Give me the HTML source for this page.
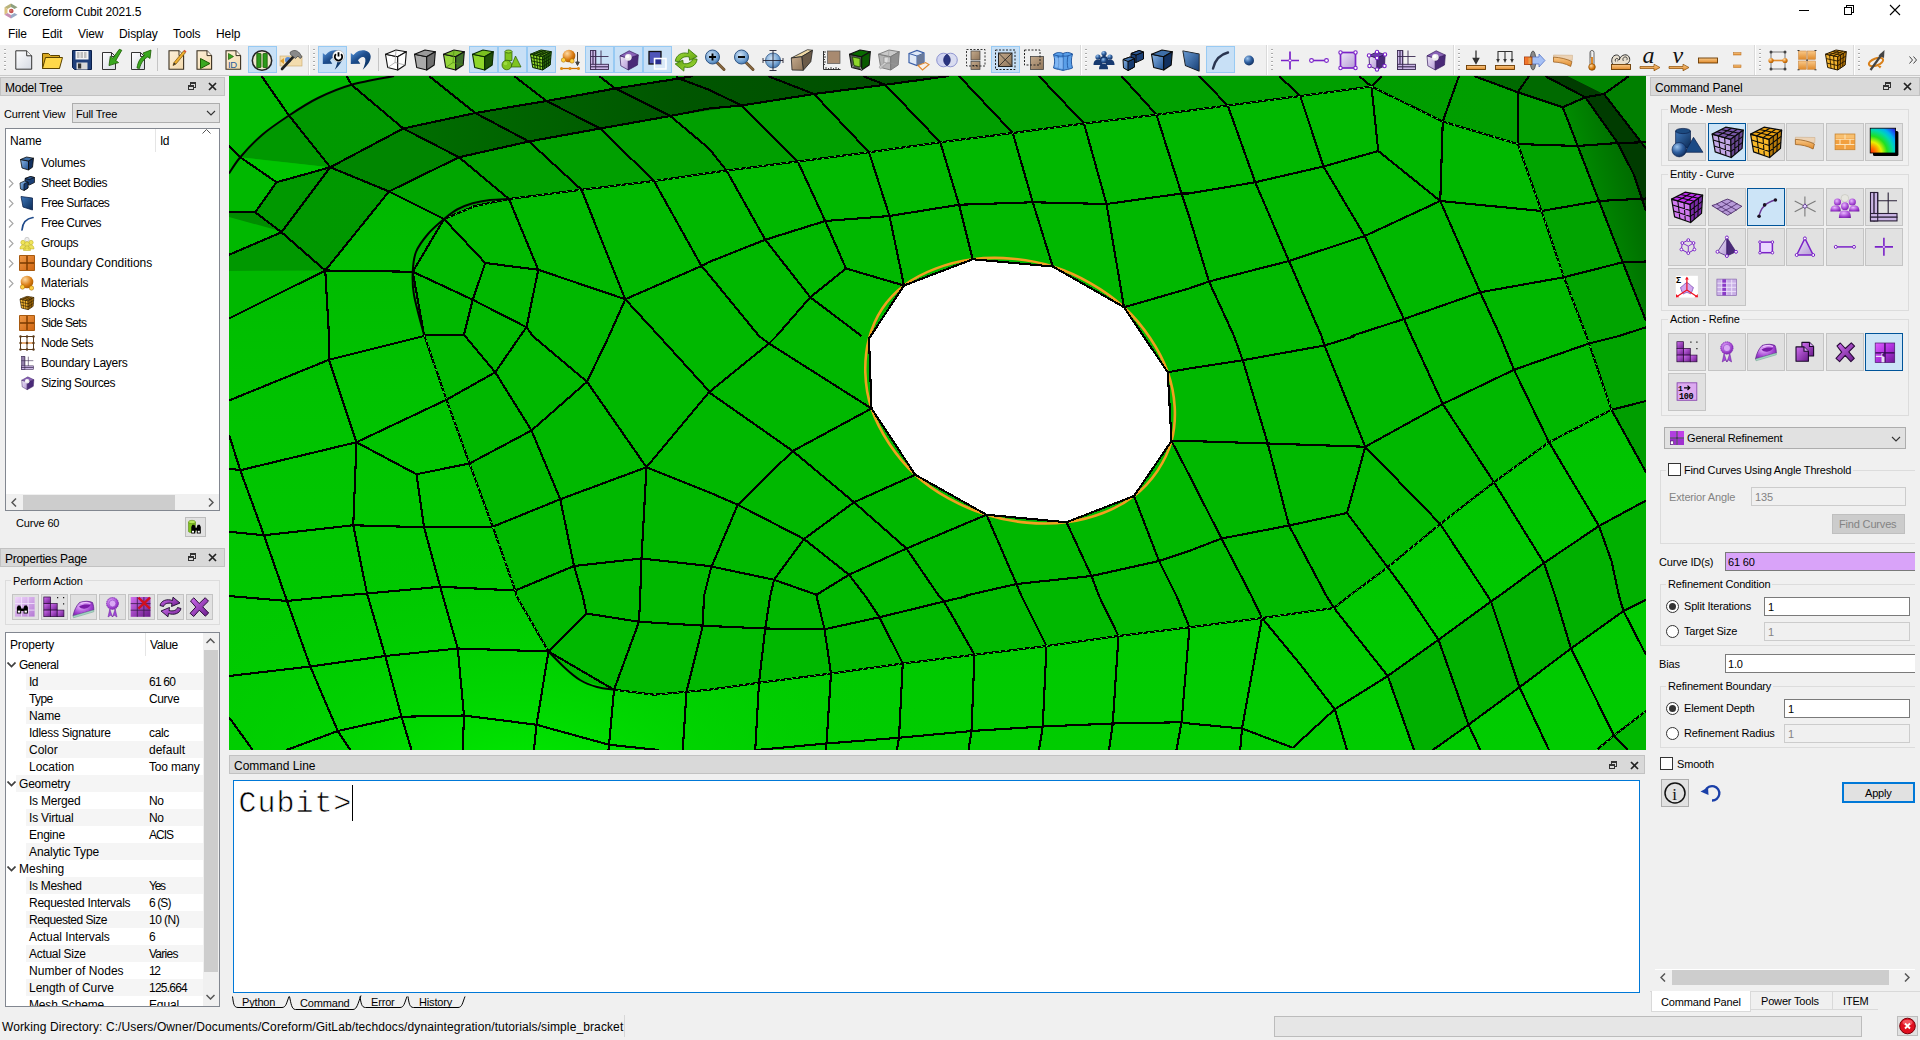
<!DOCTYPE html>
<html><head><meta charset="utf-8"><title>Coreform Cubit 2021.5</title>
<style>
*{box-sizing:border-box;margin:0;padding:0}
html,body{width:1920px;height:1040px;overflow:hidden;background:#f0f0f0}
body{font-family:"Liberation Sans",sans-serif;font-size:12px;color:#000;position:relative;line-height:1}
.abs{position:absolute}
.t{position:absolute;white-space:nowrap;line-height:14px;height:14px;font-size:12px;letter-spacing:-0.15px}
.s{position:absolute;white-space:nowrap;line-height:14px;height:14px;font-size:11px;letter-spacing:-0.17px}
.dt{position:absolute;background:#d9d9d9;border:1px solid #c2c2c2}
.gb{position:absolute;border:1px solid #dcdcdc}
.gbl{position:absolute;background:#f0f0f0;padding:0 2px;white-space:nowrap;line-height:14px;height:14px;font-size:11px;letter-spacing:-0.17px}
.btn{position:absolute;background:#e1e1e1;border:1px solid #adadad}
.btn.on{background:#cce4f7;border-color:#005499}
.fld{position:absolute;background:#fff;border:1px solid #7a7a7a}
.fld.dis{background:#f0f0f0;border-color:#cccccc;color:#838383}
.tb-on{position:absolute;background:#c8e0f6;border:1px solid #98caf3;top:46px;height:27px;width:29px}
.sep{position:absolute;top:48px;width:1px;height:23px;background:#c5c5c5}
.hdl{position:absolute;top:49px;width:2px;height:21px;background:repeating-linear-gradient(#a9a9a9 0 1px,#fff 1px 2px,transparent 2px 4px)}
.ic{position:absolute;width:24px;height:24px;top:48px}
.cb{position:absolute;width:13px;height:13px;background:#fff;border:1px solid #333}
.rd{position:absolute;width:13px;height:13px;border-radius:50%;background:#fff;border:1px solid #333}
.rd.on::after{content:"";position:absolute;left:2px;top:2px;width:7px;height:7px;border-radius:50%;background:#333}
.row{position:absolute;left:6px;height:17px}
</style></head>
<body>
<div class="abs" style="left:0;top:0;width:1920px;height:45px;background:#fff"></div>
<div class="abs" style="left:2.5px;top:3px;width:16px;height:16px"><svg width="16" height="16" viewBox="0 0 16 16" style="display:block;"><path d="M1.5 4.2L8 0.5L8 4L4.5 6Z" fill="#b9b37c"/><path d="M8 0.5L14.5 4.2L11.5 6L8 4Z" fill="#8fa07e"/><path d="M1.5 11.8L1.5 4.2L4.5 6L4.5 10Z" fill="#dcc27e"/><path d="M8 15.5L1.5 11.8L4.5 10L8 12Z" fill="#c78fb4"/><path d="M14.5 11.8L8 15.5L8 12L11.5 10Z" fill="#9aaac6"/><circle cx="8.3" cy="8" r="2.3" fill="#c25252"/><circle cx="7.8" cy="7.4" r="1" fill="#d87a6a"/></svg></div>
<div class="t" style="left:23px;top:5px;letter-spacing:-0.15px">Coreform Cubit 2021.5</div>
<svg class="abs" style="left:1780px;top:0" width="140" height="22" viewBox="0 0 140 22"><g stroke="#000" stroke-width="1" fill="none" shape-rendering="crispEdges"><path d="M19 10.5h10"/><path d="M64.5 7.5h7v7h-7zM66.5 7.5v-2h7v7h-2"/></g><path d="M110 5l10 10M120 5l-10 10" stroke="#000" stroke-width="1.1" fill="none"/></svg>
<div class="t" style="left:8px;top:27px;letter-spacing:-0.1px">File</div>
<div class="t" style="left:42px;top:27px;letter-spacing:-0.1px">Edit</div>
<div class="t" style="left:78px;top:27px;letter-spacing:-0.1px">View</div>
<div class="t" style="left:119px;top:27px;letter-spacing:-0.1px">Display</div>
<div class="t" style="left:173px;top:27px;letter-spacing:-0.1px">Tools</div>
<div class="t" style="left:216px;top:27px;letter-spacing:-0.1px">Help</div>
<div class="abs" style="left:0;top:45px;width:1920px;height:31px;background:#f0f0f0"></div>
<div class="abs" style="left:0;top:75px;width:1920px;height:1px;background:#c9c9c9"></div>
<svg width="0" height="0" style="position:absolute"><defs>
<linearGradient id="gOr" x1="0" y1="0" x2="0" y2="1"><stop offset="0" stop-color="#f9c98a"/><stop offset="1" stop-color="#e08a2a"/></linearGradient>
<linearGradient id="gOrH" x1="0" y1="0" x2="1" y2="0"><stop offset="0" stop-color="#f9c98a"/><stop offset="1" stop-color="#e08a2a"/></linearGradient>
<linearGradient id="gBl" x1="0" y1="0" x2="1" y2="1"><stop offset="0" stop-color="#8db8e8"/><stop offset="1" stop-color="#1f4f8f"/></linearGradient>
<linearGradient id="gBlD" x1="0" y1="0" x2="1" y2="1"><stop offset="0" stop-color="#3f78bb"/><stop offset="1" stop-color="#0b2a55"/></linearGradient>
<linearGradient id="gPu" x1="0" y1="0" x2="1" y2="1"><stop offset="0" stop-color="#eee6f7"/><stop offset="1" stop-color="#b49ad6"/></linearGradient>
<linearGradient id="gPg" x1="0" y1="0" x2="1" y2="1"><stop offset="0" stop-color="#ffffff"/><stop offset="1" stop-color="#d5d9e2"/></linearGradient>
<linearGradient id="gBg" x1="0" y1="0" x2="1" y2="1"><stop offset="0" stop-color="#fdf0d8"/><stop offset="1" stop-color="#f3d9ad"/></linearGradient>
<linearGradient id="gBr" x1="0" y1="0" x2="1" y2="1"><stop offset="0" stop-color="#c4aa8c"/><stop offset="1" stop-color="#8f755a"/></linearGradient>
<linearGradient id="gGr" x1="0" y1="0" x2="1" y2="1"><stop offset="0" stop-color="#a5e03a"/><stop offset="1" stop-color="#5fa010"/></linearGradient>
<radialGradient id="rBl" cx="0.35" cy="0.3" r="0.8"><stop offset="0" stop-color="#9cc4ee"/><stop offset="0.5" stop-color="#2f5f9f"/><stop offset="1" stop-color="#0b2550"/></radialGradient>
<radialGradient id="rOr" cx="0.35" cy="0.3" r="0.8"><stop offset="0" stop-color="#ffd9a0"/><stop offset="0.6" stop-color="#d97a10"/><stop offset="1" stop-color="#9a5200"/></radialGradient>
<radialGradient id="rPu" cx="0.4" cy="0.35" r="0.8"><stop offset="0" stop-color="#e9b8ff"/><stop offset="0.6" stop-color="#a040d0"/><stop offset="1" stop-color="#6a1a9a"/></radialGradient>
<radialGradient id="rGl" cx="0.4" cy="0.35" r="0.7"><stop offset="0" stop-color="#cfe2f5"/><stop offset="0.7" stop-color="#6f9fd0"/><stop offset="1" stop-color="#3f6fa5"/></radialGradient>
<radialGradient id="rRb" gradientUnits="userSpaceOnUse" cx="3.5" cy="27.5" r="30"><stop offset="0" stop-color="#ff1000"/><stop offset="0.22" stop-color="#ff9000"/><stop offset="0.38" stop-color="#f0f000"/><stop offset="0.55" stop-color="#20e020"/><stop offset="0.72" stop-color="#00d0e0"/><stop offset="0.9" stop-color="#2050ff"/><stop offset="1" stop-color="#2030d0"/></radialGradient>
<radialGradient id="rRb2" gradientUnits="userSpaceOnUse" cx="5.2" cy="30" r="34"><stop offset="0" stop-color="#ff1800"/><stop offset="0.2" stop-color="#ff9000"/><stop offset="0.33" stop-color="#e8f000"/><stop offset="0.5" stop-color="#20e020"/><stop offset="0.68" stop-color="#00d8b0"/><stop offset="0.8" stop-color="#00b0f0"/><stop offset="0.95" stop-color="#2040f0"/><stop offset="1" stop-color="#2030c0"/></radialGradient>
<linearGradient id="gPd" x1="0" y1="0" x2="1" y2="1"><stop offset="0" stop-color="#d070f0"/><stop offset="1" stop-color="#6a1a8a"/></linearGradient>
<linearGradient id="gPd2" x1="0" y1="0" x2="1" y2="1"><stop offset="0" stop-color="#e060ff"/><stop offset="0.5" stop-color="#b030e0"/><stop offset="1" stop-color="#6a1a90"/></linearGradient>
<linearGradient id="gPg3" x1="0" y1="0" x2="1" y2="1"><stop offset="0" stop-color="#f0d8fb"/><stop offset="1" stop-color="#b478d4"/></linearGradient>
<linearGradient id="gOrD" x1="0" y1="0" x2="1" y2="1"><stop offset="0" stop-color="#f09a48"/><stop offset="1" stop-color="#cf6410"/></linearGradient>
<linearGradient id="gUn" x1="0" y1="0" x2="0.7" y2="1"><stop offset="0" stop-color="#5a9ae0"/><stop offset="0.45" stop-color="#1f4f8f"/><stop offset="1" stop-color="#08305f"/></linearGradient>
<linearGradient id="gRb" x1="0" y1="1" x2="1" y2="0"><stop offset="0" stop-color="#ff2000"/><stop offset="0.3" stop-color="#ffe000"/><stop offset="0.55" stop-color="#20e020"/><stop offset="0.8" stop-color="#00c0ff"/><stop offset="1" stop-color="#2040ff"/></linearGradient>
</defs></svg>
<div class="hdl" style="left:4px"></div>
<div class="sep" style="left:157px"></div>
<div class="sep" style="left:378px"></div>
<div class="sep" style="left:308px;top:45px;height:30px;background:#dadada"></div><div class="sep" style="left:309px;top:45px;height:30px;background:#fff"></div>
<div class="hdl" style="left:313px"></div>
<div class="sep" style="left:1080px;top:45px;height:30px;background:#dadada"></div><div class="sep" style="left:1081px;top:45px;height:30px;background:#fff"></div>
<div class="hdl" style="left:1085px"></div>
<div class="sep" style="left:1266px;top:45px;height:30px;background:#dadada"></div><div class="sep" style="left:1267px;top:45px;height:30px;background:#fff"></div>
<div class="hdl" style="left:1271px"></div>
<div class="sep" style="left:1453px;top:45px;height:30px;background:#dadada"></div><div class="sep" style="left:1454px;top:45px;height:30px;background:#fff"></div>
<div class="hdl" style="left:1458px"></div>
<div class="sep" style="left:1754px;top:45px;height:30px;background:#dadada"></div><div class="sep" style="left:1755px;top:45px;height:30px;background:#fff"></div>
<div class="hdl" style="left:1759px"></div>
<div class="sep" style="left:1853px;top:45px;height:30px;background:#dadada"></div><div class="sep" style="left:1854px;top:45px;height:30px;background:#fff"></div>
<div class="hdl" style="left:1858px"></div>
<div class="ic" style="left:11px"><svg width="24" height="24" viewBox="0 0 24 24" style="display:block;"><path d="M4.8 2.8h10.9l5 5v13.4h-15.9z" fill="url(#gPg)" stroke="#333" stroke-width="1"/><path d="M15.7 2.8v5h5" fill="#f4f4f4" stroke="#333" stroke-width="1"/></svg></div>
<div class="ic" style="left:40px"><svg width="24" height="24" viewBox="0 0 24 24" style="display:block;"><path d="M2.5 20.5V5.5h6l2 2h9v13z" fill="#d9a820" stroke="#5a4200" stroke-width="1"/><path d="M2.5 20.5L5.5 9.5h17l-3 11z" fill="#ffd84a" stroke="#5a4200" stroke-width="1"/></svg></div>
<div class="ic" style="left:69.5px"><svg width="24" height="24" viewBox="0 0 24 24" style="display:block;"><path d="M2.5 2.5h19v19h-17l-2-2z" fill="#1f3f7a" stroke="#0a1f4a" stroke-width="1"/><rect x="5.5" y="3" width="13" height="8.5" fill="#f4f4f4"/><path d="M7 5h10M7 7h10M7 9h10" stroke="#8a8a8a" stroke-width="1" stroke-dasharray="2.5 1"/><rect x="6.5" y="14.5" width="11" height="7" fill="#d8d8d8"/><rect x="8" y="15.5" width="3.2" height="5" fill="#333"/></svg></div>
<div class="ic" style="left:98.5px"><svg width="24" height="24" viewBox="0 0 24 24" style="display:block;"><path d="M3.5 4.5h9l4 4v13h-13z" fill="url(#gPg)" stroke="#333" stroke-width="1"/><path d="M12.5 4.5v4h4" fill="none" stroke="#333"/><path d="M22.8 2.3L20.3 1.3L13.8 10.2L11.3 8.2L10 17.6L19.6 14.6L16.8 12.5Z" fill="#3aa820" stroke="#1a5a00" stroke-width="0.8" stroke-linejoin="round"/></svg></div>
<div class="ic" style="left:127.5px"><svg width="24" height="24" viewBox="0 0 24 24" style="display:block;"><path d="M3.5 4.5h9l4 4v13h-13z" fill="url(#gPg)" stroke="#333" stroke-width="1"/><path d="M12.5 4.5v4h4" fill="none" stroke="#333"/><path d="M9 20C10 13 13 9 16.5 7.5L15 5l8-3-1 8.5-2.2-1.6C16 11 13 14.5 11.5 20.5z" fill="#3aa820" stroke="#1a5a00" stroke-width="0.8"/></svg></div>
<div class="ic" style="left:163.5px"><svg width="24" height="24" viewBox="0 0 24 24" style="display:block;"><path d="M5 2.8h10l4.6 4.8v13.6h-14.6z" fill="url(#gBg)" stroke="#3a3020" stroke-width="1.1"/><path d="M15 2.8v4.8h4.6" fill="#fff6e6" stroke="#3a3020" stroke-width="1"/><path d="M9 17.5l1-3L19.5 3l2 1.6L12 16z" fill="#f0b030" stroke="#7a5000" stroke-width="0.7"/><path d="M9 17.5l1-3 2 1.5z" fill="#333"/><path d="M19.5 3l1-1.2 2 1.6-1 1.2z" fill="#e05030"/></svg></div>
<div class="ic" style="left:192px"><svg width="24" height="24" viewBox="0 0 24 24" style="display:block;"><path d="M5 2.8h10l4.6 4.8v13.6h-14.6z" fill="url(#gBg)" stroke="#3a3020" stroke-width="1.1"/><path d="M15 2.8v4.8h4.6" fill="#fff6e6" stroke="#3a3020" stroke-width="1"/><path d="M8.5 10.5l9.5 5-9.5 5z" fill="#3aa820" stroke="#1a5a00" stroke-width="1"/></svg></div>
<div class="ic" style="left:221px"><svg width="24" height="24" viewBox="0 0 24 24" style="display:block;"><path d="M5 2.8h10l4.6 4.8v13.6h-14.6z" fill="url(#gBg)" stroke="#3a3020" stroke-width="1.1"/><path d="M15 2.8v4.8h4.6" fill="#fff6e6" stroke="#3a3020" stroke-width="1"/><path d="M7.5 5.5l5 3-5 3z" fill="#3aa820" stroke="#1a5a00" stroke-width="0.7"/><text x="7" y="19.6" font-family="Liberation Sans" font-size="9.5" fill="#2a5a9a" letter-spacing="-0.3">ID</text></svg></div>
<div class="tb-on" style="left:247.5px"></div>
<div class="ic" style="left:250px"><svg width="24" height="24" viewBox="0 0 24 24" style="display:block;"><circle cx="12" cy="12.5" r="9.7" fill="#efe6cf" stroke="#222" stroke-width="1.5"/><rect x="6.8" y="5.5" width="4.2" height="14" rx="0.5" fill="#2a9a1a" stroke="#1a5a00" stroke-width="0.8"/><rect x="13" y="5.5" width="4.2" height="14" rx="0.5" fill="#2a9a1a" stroke="#1a5a00" stroke-width="0.8"/></svg></div>
<div class="ic" style="left:279px"><svg width="24" height="24" viewBox="0 0 24 24" style="display:block;"><rect x="1" y="8" width="22" height="10" fill="#f3dcae" stroke="#c9a86a" stroke-width="0.6"/><circle cx="9" cy="12" r="3" fill="#5a8ad0"/><path d="M1 13l4-3v6z" fill="#e0a030"/><path d="M3 21L15 8" stroke="#222" stroke-width="2.6" stroke-linecap="round"/><path d="M11 4.5c3-3 7-2.5 9.5 0.5l2.5 4-2 1.5-2-2.5-2.5 2.5-5-4z" fill="#8a8a8a" stroke="#444" stroke-width="0.7"/></svg></div>
<div class="tb-on" style="left:318.0px"></div>
<div class="ic" style="left:320.5px"><svg width="24" height="24" viewBox="0 0 24 24" style="display:block;"><path d="M1.8 5L4.3 7C6 5.5 9 2.2 13.7 2.2C18 2.2 21.7 4.5 21.7 8.5C21.7 13 18 18 13.7 21.7C15.5 18 16.8 14 16.3 11C16 9.5 14.8 9 13.7 9C12 9 10.5 10.5 9 12.3L11.3 15.7L1.8 16Z" fill="url(#gUn)"/><circle cx="17.5" cy="8.2" r="5.8" fill="#fff" stroke="#aaa" stroke-width="0.6"/><path d="M14.9 6.2a3.7 3.7 0 1 0 5.2 0M17.5 4.3v4.3" stroke="#000" stroke-width="1.8" fill="none"/></svg></div>
<div class="ic" style="left:349px"><svg width="24" height="24" viewBox="0 0 24 24" style="display:block;"><path d="M1.8 5L4.3 7C6 5.5 9 2.2 13.7 2.2C18 2.2 21.7 4.5 21.7 8.5C21.7 13 18 18 13.7 21.7C15.5 18 16.8 14 16.3 11C16 9.5 14.8 9 13.7 9C12 9 10.5 10.5 9 12.3L11.3 15.7L1.8 16Z" fill="url(#gUn)"/></svg></div>
<div class="ic" style="left:384px"><svg width="24" height="24" viewBox="0 0 24 24" style="display:block;"><g stroke="#111" stroke-width="1.1" stroke-linejoin="round"><path d="M1.5 6.2L13.7 8.7L13.7 22L3.7 19.5Z" fill="#ffffff"/><path d="M1.5 6.2L12 2L22.3 3.7L13.7 8.7Z" fill="#ffffff"/><path d="M13.7 8.7L22.3 3.7L21.2 17L13.7 22Z" fill="#ffffff"/></g><path d="M12 2L11 14.5L3.7 19.5M11 14.5L21.2 17" stroke="#999" stroke-width="0.7" fill="none"/></svg></div>
<div class="ic" style="left:413px"><svg width="24" height="24" viewBox="0 0 24 24" style="display:block;"><g stroke="#111" stroke-width="1.1" stroke-linejoin="round"><path d="M1.5 6.2L13.7 8.7L13.7 22L3.7 19.5Z" fill="#a9a9a9"/><path d="M1.5 6.2L12 2L22.3 3.7L13.7 8.7Z" fill="#9a9a9a"/><path d="M13.7 8.7L22.3 3.7L21.2 17L13.7 22Z" fill="#6f6f6f"/></g></svg></div>
<div class="ic" style="left:442px"><svg width="24" height="24" viewBox="0 0 24 24" style="display:block;"><g stroke="#111" stroke-width="1.1" stroke-linejoin="round"><path d="M1.5 6.2L13.7 8.7L13.7 22L3.7 19.5Z" fill="#95d63a"/><path d="M1.5 6.2L12 2L22.3 3.7L13.7 8.7Z" fill="#7fc030"/><path d="M13.7 8.7L22.3 3.7L21.2 17L13.7 22Z" fill="#3f6f2a"/></g><path d="M12 2L11 14.5L3.7 19.5M11 14.5L21.2 17" stroke="#4a8a10" stroke-width="0.7" fill="none"/></svg></div>
<div class="tb-on" style="left:468.5px"></div>
<div class="ic" style="left:471px"><svg width="24" height="24" viewBox="0 0 24 24" style="display:block;"><g stroke="#0a2a00" stroke-width="1.1" stroke-linejoin="round"><path d="M1.5 6.2L13.7 8.7L13.7 22L3.7 19.5Z" fill="#8fd62a"/><path d="M1.5 6.2L12 2L22.3 3.7L13.7 8.7Z" fill="#7ac020"/><path d="M13.7 8.7L22.3 3.7L21.2 17L13.7 22Z" fill="#1f4f08"/></g></svg></div>
<div class="tb-on" style="left:497.5px"></div>
<div class="ic" style="left:500px"><svg width="24" height="24" viewBox="0 0 24 24" style="display:block;"><path d="M5 3.5v9h7v-9" fill="#7fc41f" stroke="#2a5a00" stroke-width="0.7"/><ellipse cx="8.5" cy="3.5" rx="3.5" ry="1.5" fill="#9ad83a" stroke="#2a5a00" stroke-width="0.7"/><path d="M15.5 8l5.5 11h-10z" fill="#7fc41f" stroke="#2a5a00" stroke-width="0.7"/><circle cx="6.8" cy="17" r="4.8" fill="#7fc41f" stroke="#2a5a00" stroke-width="0.7"/><circle cx="5.5" cy="15.5" r="1.8" fill="#a5e04a" opacity="0.8"/></svg></div>
<div class="tb-on" style="left:526.5px"></div>
<div class="ic" style="left:529px"><svg width="24" height="24" viewBox="0 0 24 24" style="display:block;"><g stroke="#0a2a00" stroke-width="1" stroke-linejoin="round"><path d="M1.5 6.2L13.7 8.7L13.7 22L3.7 19.5Z" fill="#8fd62a"/><path d="M1.5 6.2L12 2L22.3 3.7L13.7 8.7Z" fill="#7ac020"/><path d="M13.7 8.7L22.3 3.7L21.2 17L13.7 22Z" fill="#2f6f10"/></g><path d="M2.0 9.5L13.7 12.0M4.5 6.8L6.2 20.1M15.8 7.4L15.6 20.8M13.7 12.0L22.0 7.0M4.1 5.2L15.8 7.4M4.5 6.8L14.6 2.4M2.6 12.9L13.7 15.3M7.6 7.4L8.7 20.8M18.0 6.2L17.4 19.5M13.7 15.3L21.8 10.4M6.8 4.1L18.0 6.2M7.6 7.4L17.1 2.9M3.2 16.2L13.7 18.7M10.6 8.1L11.2 21.4M20.1 5.0L19.3 18.2M13.7 18.7L21.5 13.7M9.4 3.0L20.1 5.0M10.6 8.1L19.7 3.3" stroke="#0a2a00" stroke-width="0.9" fill="none"/></svg></div>
<div class="ic" style="left:558px"><svg width="24" height="24" viewBox="0 0 24 24" style="display:block;"><circle cx="11" cy="8" r="6.3" fill="url(#rOr)"/><circle cx="5.5" cy="12" r="2.2" fill="#ffd040" stroke="#a06000" stroke-width="0.5"/><circle cx="14" cy="13" r="2.2" fill="#ffd040" stroke="#a06000" stroke-width="0.5"/><path d="M19.5 4v12M17.7 14l1.8 3.5 1.8-3.5z" stroke="#444" stroke-width="1" fill="#444"/><path d="M3 20.5h18" stroke="#d07000" stroke-width="1.3"/><circle cx="3.5" cy="20.5" r="1.5" fill="#e08a10"/><circle cx="12" cy="20.5" r="1.5" fill="#e08a10"/><circle cx="20.5" cy="20.5" r="1.5" fill="#e08a10"/></svg></div>
<div class="tb-on" style="left:584.5px"></div>
<div class="ic" style="left:587px"><svg width="24" height="24" viewBox="0 0 24 24" style="display:block;"><g fill="#cbb6e6" stroke="#3a2a50" stroke-width="0.9"><rect x="3.5" y="2.5" width="2.6" height="19"/><rect x="6.1" y="2.5" width="2.6" height="19"/><rect x="3.5" y="16.3" width="18" height="2.6"/><rect x="3.5" y="18.9" width="18" height="2.6"/></g><path d="M14 2.5v14M3.5 8.5h18M8.7 2.5v19" stroke="#3a2a50" stroke-width="0.9" fill="none"/></svg></div>
<div class="tb-on" style="left:613.5px"></div>
<div class="ic" style="left:616px"><svg width="24" height="24" viewBox="0 0 24 24" style="display:block;"><g stroke="#3a2060" stroke-width="0.7" stroke-linejoin="round"><path d="M4 7.8L12.3 10.3L12.3 22L4.8 17.8Z" fill="url(#gPu)"/><path d="M12.3 10.3L22.3 7L21.5 17L12.3 22Z" fill="#4a2a78"/><path d="M13.2 2.8L22.3 7L12.3 10.3L4 7.8Z" fill="#8a63b8"/></g><circle cx="12.3" cy="9.3" r="3.4" fill="#ececec"/><circle cx="11.6" cy="8.5" r="1.8" fill="#fff"/></svg></div>
<div class="tb-on" style="left:642.5px"></div>
<div class="ic" style="left:645px"><svg width="24" height="24" viewBox="0 0 24 24" style="display:block;"><rect x="4" y="3.5" width="12" height="12.5" fill="#4f55b8" stroke="#111" stroke-width="1.3"/><rect x="9.5" y="10.5" width="11.5" height="10.5" fill="#e6eefc" fill-opacity="0.6" stroke="#fff" stroke-width="1.5"/><rect x="10.5" y="11.5" width="5.5" height="4.5" fill="#2a2f90"/></svg></div>
<div class="ic" style="left:674px"><svg width="24" height="24" viewBox="0 0 24 24" style="display:block;"><path d="M1.3 13.2C2 7 8 3.5 14.2 5.5L14.6 1.3L23.2 8.5L15.6 12.3L15.2 9C11 8 7 9.5 5.3 13.8Z" fill="url(#gGr)" stroke="#2f6f00" stroke-width="0.8" stroke-linejoin="round"/><path d="M1.3 13.2C2 7 8 3.5 14.2 5.5L14.6 1.3L23.2 8.5L15.6 12.3L15.2 9C11 8 7 9.5 5.3 13.8Z" fill="url(#gGr)" stroke="#2f6f00" stroke-width="0.8" stroke-linejoin="round" transform="rotate(180 12.2 12.2)"/></svg></div>
<div class="ic" style="left:703px"><svg width="24" height="24" viewBox="0 0 24 24" style="display:block;"><path d="M13 13.5L21 21.5" stroke="#6b4e2e" stroke-width="3" stroke-linecap="round"/><path d="M13 13.5L21 21.5" stroke="#a08050" stroke-width="1" stroke-linecap="round"/><circle cx="9.5" cy="9" r="7" fill="url(#rGl)" stroke="#2f5585" stroke-width="1"/><path d="M6 9h7M9.5 5.5v7" stroke="#000" stroke-width="1.9"/></svg></div>
<div class="ic" style="left:732px"><svg width="24" height="24" viewBox="0 0 24 24" style="display:block;"><path d="M13 13.5L21 21.5" stroke="#6b4e2e" stroke-width="3" stroke-linecap="round"/><path d="M13 13.5L21 21.5" stroke="#a08050" stroke-width="1" stroke-linecap="round"/><circle cx="9.5" cy="9" r="7" fill="url(#rGl)" stroke="#2f5585" stroke-width="1"/><path d="M6 9h7" stroke="#000" stroke-width="1.9"/></svg></div>
<div class="ic" style="left:761px"><svg width="24" height="24" viewBox="0 0 24 24" style="display:block;"><circle cx="12" cy="12.5" r="7.5" fill="url(#rGl)" stroke="#2f5585" stroke-width="0.8"/><path d="M12 2.5v20M2 12.5h20" stroke="#223" stroke-width="0.9"/><path d="M8.5 2.5h7M8.5 22.5h7M2 10v5M22 10v5" stroke="#223" stroke-width="0.9"/></svg></div>
<div class="ic" style="left:790px"><svg width="24" height="24" viewBox="0 0 24 24" style="display:block;"><g stroke="#222" stroke-width="0.8" stroke-linejoin="round"><path d="M1.3 10L17.5 1.7L22.5 2.3L11.7 8.7Z" fill="#f0d9a5"/><path d="M11.7 8.7L22.5 2.3L20.8 13.7L13.3 22.3Z" fill="#6b5a48"/><path d="M1.3 10L11.7 8.7L13.3 22.3L2 22Z" fill="url(#gBr)"/></g></svg></div>
<div class="ic" style="left:819px"><svg width="24" height="24" viewBox="0 0 24 24" style="display:block;"><rect x="8.5" y="3" width="12.5" height="12.5" fill="#a88a70" stroke="#555" stroke-width="0.7"/><path d="M4.5 3v18.5h17" stroke="#333" stroke-width="1" fill="none"/><path d="M4.5 4h2.5M4.5 6.5h1.5M4.5 9h2.5M4.5 11.5h1.5M4.5 14h2.5M4.5 16.5h1.5M7 21.5v-2.5M9.5 21.5v-1.5M12 21.5v-2.5M14.5 21.5v-1.5M17 21.5v-2.5M19.5 21.5v-1.5" stroke="#333" stroke-width="0.9"/></svg></div>
<div class="ic" style="left:848px"><svg width="24" height="24" viewBox="0 0 24 24" style="display:block;"><g stroke="#111" stroke-width="1.1" stroke-linejoin="round"><path d="M1.5 6.2L13.7 8.7L13.7 22L3.7 19.5Z" fill="#555"/><path d="M1.5 6.2L12 2L22.3 3.7L13.7 8.7Z" fill="#0a6a00"/><path d="M13.7 8.7L22.3 3.7L21.2 17L13.7 22Z" fill="#0a5a00"/></g><path d="M4.5 9L12 10.5v8.5L6 17.5z" fill="#8fd62a" stroke="#1a4a00" stroke-width="0.8"/><path d="M3.7 19.5L6 17.5M13.7 22l-1.7-3" stroke="#bbb" stroke-width="0.7"/></svg></div>
<div class="ic" style="left:877px"><svg width="24" height="24" viewBox="0 0 24 24" style="display:block;"><g stroke="#777" stroke-width="0.9" stroke-linejoin="round"><path d="M1.5 6.2L13.7 8.7L13.7 22L3.7 19.5Z" fill="#b5b5b5"/><path d="M1.5 6.2L12 2L22.3 3.7L13.7 8.7Z" fill="#c9c9c9"/><path d="M13.7 8.7L22.3 3.7L21.2 17L13.7 22Z" fill="#8f8f8f"/></g><path d="M7 9h6v6H7z" fill="#ddd" stroke="#888" stroke-width="0.7"/><path d="M2 19l6-5 1.5 2-6 5z" fill="#d0d0d0" stroke="#999" stroke-width="0.6"/><path d="M12 2L11 14.5L3.7 19.5M11 14.5L21.2 17" stroke="#999" stroke-width="0.6" fill="none"/></svg></div>
<div class="ic" style="left:906px"><svg width="24" height="24" viewBox="0 0 24 24" style="display:block;"><path d="M3 5.5l8-3 7 2.5v9l-7 3.5-8-3z" fill="#dfe9f7" stroke="#3a5fa8" stroke-width="1.2"/><path d="M3 5.5l8 2.5 7-3M11 8v9.5" stroke="#3a5fa8" stroke-width="1" fill="none"/><path d="M11 8l7-3v9l-7 3.5z" fill="#6a7a9a"/><path d="M12 17.5l7.5-3 3.5 2-6.5 5.5z" fill="#f8f0e8" stroke="#e08a30" stroke-width="1.1"/></svg></div>
<div class="ic" style="left:935px"><svg width="24" height="24" viewBox="0 0 24 24" style="display:block;"><circle cx="8.5" cy="12" r="6.8" fill="#cfd3f0" stroke="#7a80c8" stroke-width="0.8"/><circle cx="15.5" cy="12" r="6.8" fill="#cfd3f0" fill-opacity="0.7" stroke="#7a80c8" stroke-width="0.8"/><path d="M12 6.2a6.8 6.8 0 0 1 0 11.6a6.8 6.8 0 0 1 0-11.6z" fill="#2a3580" stroke="#1a2060" stroke-width="0.6"/></svg></div>
<div class="ic" style="left:964px"><svg width="24" height="24" viewBox="0 0 24 24" style="display:block;"><rect x="7" y="3" width="9" height="9" fill="url(#gBr)" stroke="#444" stroke-width="0.7"/><rect x="7" y="13.5" width="9" height="8" fill="url(#gBr)" stroke="#444" stroke-width="0.7"/><rect x="2.5" y="1.5" width="18.5" height="16.5" fill="none" stroke="#222" stroke-width="0.9" stroke-dasharray="2 1.5"/><path d="M8.5 17.5h6" stroke="#222" stroke-dasharray="1.5 1.5"/></svg></div>
<div class="tb-on" style="left:990.5px"></div>
<div class="ic" style="left:993px"><svg width="24" height="24" viewBox="0 0 24 24" style="display:block;"><rect x="5.5" y="5" width="13.5" height="13.5" fill="url(#gBr)" stroke="#222" stroke-width="1"/><path d="M5.5 5l13.5 13.5M19 5L5.5 18.5" stroke="#222" stroke-width="0.8"/><rect x="2.5" y="2" width="19.5" height="19.5" fill="none" stroke="#222" stroke-width="1" stroke-dasharray="2 1.5"/></svg></div>
<div class="ic" style="left:1022px"><svg width="24" height="24" viewBox="0 0 24 24" style="display:block;"><rect x="8.5" y="8.5" width="13" height="13" fill="url(#gBr)" stroke="#444" stroke-width="0.8"/><rect x="2.5" y="2" width="15.5" height="15" fill="none" stroke="#222" stroke-width="1" stroke-dasharray="2 1.5"/></svg></div>
<div class="ic" style="left:1051px"><svg width="24" height="24" viewBox="0 0 24 24" style="display:block;"><path d="M2.5 6.5C6 4 9 4 12 5.5c3-1.5 6-1.5 9.5 0.5-1.5 5-1.5 9 0 14-3.5 1.5-6.5 1.5-9.5 2.5-3-1-6-1-9.5-2.5 1.5-5 1.5-9 0-13.5z" fill="#5a9fe8" stroke="#1a4f9a" stroke-width="0.9"/><path d="M2.5 6.5C6 8 9 8.5 12 8c3 0.5 6 0 9.5-2M12 5.5V22M7 7.5c1 5 1 9 0 13M17 7.5c-1 5-1 9 0 13" stroke="#1a4f9a" stroke-width="0.8" fill="none"/><path d="M3.5 9c3 1 6 1 8.5 0.5v11.5c-3-1-5.5-1-8.5-2.5 1-4 1-6.5 0-9.5z" fill="#a5d0ff" fill-opacity="0.5"/></svg></div>
<div class="ic" style="left:1092px"><svg width="24" height="24" viewBox="0 0 24 24" style="display:block;"><circle cx="12" cy="5.5" r="2.6" fill="url(#rBl)"/><path d="M7.5 13.5c0-4 2-5.5 4.5-5.5s4.5 1.5 4.5 5.5z" fill="#173a70"/><circle cx="6" cy="9" r="2.6" fill="url(#rBl)"/><path d="M1.5 17c0-4 2-5.5 4.5-5.5s4.5 1.5 4.5 5.5z" fill="#173a70"/><circle cx="18" cy="9" r="2.6" fill="url(#rBl)"/><path d="M13.5 17c0-4 2-5.5 4.5-5.5s4.5 1.5 4.5 5.5z" fill="#173a70"/><circle cx="12" cy="12.5" r="2.8600000000000003" fill="url(#rBl)"/><path d="M7.05 21.3c0-4 2-5.5 4.5-5.5s4.5 1.5 4.5 5.5z" fill="#173a70"/></svg></div>
<div class="ic" style="left:1121px"><svg width="24" height="24" viewBox="0 0 24 24" style="display:block;"><g stroke="#0a0a0a" stroke-width="1" stroke-linejoin="round"><path d="M10 5.5l8-3 4.5 1.5v7L15 14.5 10 13z" fill="#1a3f75"/><path d="M10 5.5l5 1.5 7.5-3M15 7v7.5" fill="none"/><path d="M10 5.5l8-3 4.5 1.5L15 7z" fill="#2a5590"/><path d="M2 11.5l7-2.5 4.5 1.5v8.5L7 22.5 2.5 20z" fill="url(#gBl)"/><path d="M7 13.5l6.5-3v8.5L7 22.5z" fill="#173a70"/><path d="M2 11.5l7-2.5 4.5 1.5L7 13.5z" fill="#3f70aa"/></g></svg></div>
<div class="ic" style="left:1150px"><svg width="24" height="24" viewBox="0 0 24 24" style="display:block;"><g stroke="#0a0a0a" stroke-width="1.1" stroke-linejoin="round"><path d="M1.5 6.2L13.7 8.7L13.7 22L3.7 19.5Z" fill="url(#gBl)"/><path d="M1.5 6.2L12 2L22.3 3.7L13.7 8.7Z" fill="#3f6fa8"/><path d="M13.7 8.7L22.3 3.7L21.2 17L13.7 22Z" fill="#12305f"/></g></svg></div>
<div class="ic" style="left:1179px"><svg width="24" height="24" viewBox="0 0 24 24" style="display:block;"><path d="M4 3l16 3v17L6.5 17.5z" fill="url(#gBlD)" stroke="#0a0a0a" stroke-width="1.2" stroke-linejoin="round"/><path d="M4 3l16 3v17L6.5 17.5z" fill="url(#gBl)" fill-opacity="0.55"/></svg></div>
<div class="tb-on" style="left:1205.5px"></div>
<div class="ic" style="left:1208px"><svg width="24" height="24" viewBox="0 0 24 24" style="display:block;"><path d="M5 20.5C7 12 11.5 6.5 20 4.5" fill="none" stroke="#2a3550" stroke-width="2.4" stroke-linecap="round"/></svg></div>
<div class="ic" style="left:1237px"><svg width="24" height="24" viewBox="0 0 24 24" style="display:block;"><circle cx="12" cy="12.5" r="5" fill="url(#rBl)"/></svg></div>
<div class="ic" style="left:1278px"><svg width="24" height="24" viewBox="0 0 24 24" style="display:block;"><path d="M12 3.5v18M3 12.5h18" stroke="#7a22c8" stroke-width="1.7"/><circle cx="12" cy="12.5" r="1.4" fill="#fff" stroke="#7a22c8" stroke-width="0.8"/></svg></div>
<div class="ic" style="left:1307px"><svg width="24" height="24" viewBox="0 0 24 24" style="display:block;"><path d="M5 12.5h14" stroke="#7a22c8" stroke-width="1.6"/><circle cx="4.5" cy="12.5" r="1.9" fill="#fff" stroke="#7a22c8" stroke-width="1.1"/><circle cx="19.5" cy="12.5" r="1.9" fill="#fff" stroke="#7a22c8" stroke-width="1.1"/></svg></div>
<div class="ic" style="left:1336px"><svg width="24" height="24" viewBox="0 0 24 24" style="display:block;"><rect x="4.5" y="4.5" width="15" height="15.5" fill="url(#gPu)" stroke="#7a22c8" stroke-width="1.7"/><circle cx="4.5" cy="4.5" r="1.7" fill="#fff" stroke="#7a22c8" stroke-width="1.1"/><circle cx="19.5" cy="4.5" r="1.7" fill="#fff" stroke="#7a22c8" stroke-width="1.1"/><circle cx="4.5" cy="20" r="1.7" fill="#fff" stroke="#7a22c8" stroke-width="1.1"/><circle cx="19.5" cy="20" r="1.7" fill="#fff" stroke="#7a22c8" stroke-width="1.1"/></svg></div>
<div class="ic" style="left:1365px"><svg width="24" height="24" viewBox="0 0 24 24" style="display:block;"><g stroke="#3a1a68" stroke-width="0.9" stroke-linejoin="round"><path d="M4 7.5l8 2.5v11.5L4.5 18z" fill="url(#gPu)"/><path d="M4 7.5l8-3.5 8 2.5-8 3.5z" fill="#6a3fa8"/><path d="M12 10l8-3.5-0.5 11.5-7.5 3.5z" fill="#4a2a78"/></g><circle cx="4" cy="7.5" r="1.7" fill="#fff" stroke="#7a22c8" stroke-width="1.1"/><circle cx="12" cy="4" r="1.7" fill="#fff" stroke="#7a22c8" stroke-width="1.1"/><circle cx="20" cy="6.5" r="1.7" fill="#fff" stroke="#7a22c8" stroke-width="1.1"/><circle cx="12" cy="10" r="1.7" fill="#fff" stroke="#7a22c8" stroke-width="1.1"/><circle cx="4.5" cy="18" r="1.7" fill="#fff" stroke="#7a22c8" stroke-width="1.1"/><circle cx="12" cy="21.5" r="1.7" fill="#fff" stroke="#7a22c8" stroke-width="1.1"/><circle cx="19.5" cy="18" r="1.7" fill="#fff" stroke="#7a22c8" stroke-width="1.1"/></svg></div>
<div class="ic" style="left:1394px"><svg width="24" height="24" viewBox="0 0 24 24" style="display:block;"><g fill="#cbb6e6" stroke="#3a2a50" stroke-width="0.9"><rect x="3.5" y="2.5" width="2.6" height="19"/><rect x="6.1" y="2.5" width="2.6" height="19"/><rect x="3.5" y="16.3" width="18" height="2.6"/><rect x="3.5" y="18.9" width="18" height="2.6"/></g><path d="M14 2.5v14M3.5 8.5h18M8.7 2.5v19" stroke="#3a2a50" stroke-width="0.9" fill="none"/></svg></div>
<div class="ic" style="left:1423px"><svg width="24" height="24" viewBox="0 0 24 24" style="display:block;"><g stroke="#3a2060" stroke-width="0.7" stroke-linejoin="round"><path d="M4 7.8L12.3 10.3L12.3 22L4.8 17.8Z" fill="url(#gPu)"/><path d="M12.3 10.3L22.3 7L21.5 17L12.3 22Z" fill="#4a2a78"/><path d="M13.2 2.8L22.3 7L12.3 10.3L4 7.8Z" fill="#8a63b8"/></g><circle cx="12.3" cy="9.3" r="3.4" fill="#ececec"/><circle cx="11.6" cy="8.5" r="1.8" fill="#fff"/></svg></div>
<div class="ic" style="left:1464px"><svg width="24" height="24" viewBox="0 0 24 24" style="display:block;"><path d="M12 2.5v10M9.3 10.5l2.7 5 2.7-5z" stroke="#333" stroke-width="1.3" fill="#333"/><rect x="2.5" y="17.5" width="19" height="4" fill="url(#gOr)" stroke="#6b3a00" stroke-width="0.9"/></svg></div>
<div class="ic" style="left:1493px"><svg width="24" height="24" viewBox="0 0 24 24" style="display:block;"><path d="M4.5 3.5h15M5 3.5v9M12 3.5v9M19 3.5v9" stroke="#333" stroke-width="1.1" fill="none"/><path d="M3.2 11l1.8 4 1.8-4zM10.2 11l1.8 4 1.8-4zM17.2 11l1.8 4 1.8-4z" fill="#333"/><rect x="2.5" y="17.5" width="19" height="4" fill="url(#gOr)" stroke="#6b3a00" stroke-width="0.9"/></svg></div>
<div class="ic" style="left:1522px"><svg width="24" height="24" viewBox="0 0 24 24" style="display:block;"><ellipse cx="11" cy="12.5" rx="2.8" ry="9.5" fill="#8a8a8a" stroke="#444" stroke-width="0.8"/><path d="M9 9h8v-3l6 6.5-6 6.5v-3H9z" fill="#a5c0f5" stroke="#4a6ac0" stroke-width="0.7"/><rect x="2.5" y="9" width="7.5" height="7.5" fill="url(#gOrH)" stroke="#8a2a00" stroke-width="0.8"/><rect x="2.5" y="9" width="4" height="7.5" fill="#f05a10" fill-opacity="0.7"/></svg></div>
<div class="ic" style="left:1551px"><svg width="24" height="24" viewBox="0 0 24 24" style="display:block;"><g transform="translate(-6.6 -6.8) scale(0.97)"><path d="M9.4 14.2l19.6 0.3-0.2 5.2-19.4-1.3z" fill="#ecd2b4" stroke="#c9a77f" stroke-width="0.5"/><path d="M9.4 16.4c7 0.4 13.5 1.9 19 4.6l-1.3 5c-5.5-3-11.5-4.300-17.700-4.500z" fill="url(#gOr)" stroke="#9a6020" stroke-width="0.800"/></g></svg></div>
<div class="ic" style="left:1580px"><svg width="24" height="24" viewBox="0 0 24 24" style="display:block;"><rect x="10" y="2.5" width="4" height="15" rx="2" fill="#f4f4f4" stroke="#555" stroke-width="0.9"/><rect x="11" y="9" width="2" height="9" fill="#e08a2a"/><circle cx="12" cy="19" r="3.3" fill="url(#rOr)" stroke="#8a4a00" stroke-width="0.7"/><path d="M10 5h1.5M10 7h1.5M10 9h1.5" stroke="#555" stroke-width="0.7"/></svg></div>
<div class="ic" style="left:1609px"><svg width="24" height="24" viewBox="0 0 24 24" style="display:block;"><path d="M3.5 16c-2-4 0-9 4-9 3 0 4 3 2.5 5 2-6 9-7 10.5-2 1 4-2 6-4 6" fill="#e8e0d0" stroke="#333" stroke-width="1"/><path d="M6.5 13.5c-1-2 0.5-3.5 2-3 1 0.5 1 2 0 2.5M14.5 13c-1.5-2 0-4.5 2.5-4 1.5 0.5 1.5 2.5 0.5 3.2" fill="none" stroke="#333" stroke-width="0.9"/><rect x="2.5" y="16.5" width="19" height="5" fill="url(#gOr)" stroke="#6b3a00" stroke-width="0.9"/></svg></div>
<div class="ic" style="left:1638px"><svg width="24" height="24" viewBox="0 0 24 24" style="display:block;"><text x="4.5" y="14.5" font-family="Liberation Serif" font-style="italic" font-size="24" fill="#111">a</text><path d="M2 18.5h14v-2.3l6 3.3-6 3.3v-2.3h-14z" fill="url(#gOr)" stroke="#8a4a00" stroke-width="0.7"/></svg></div>
<div class="ic" style="left:1667px"><svg width="24" height="24" viewBox="0 0 24 24" style="display:block;"><text x="5.5" y="14.5" font-family="Liberation Serif" font-style="italic" font-size="24" fill="#111">v</text><path d="M2 18.5h14v-2.3l6 3.3-6 3.3v-2.3h-14z" fill="url(#gOr)" stroke="#8a4a00" stroke-width="0.7"/></svg></div>
<div class="ic" style="left:1696px"><svg width="24" height="24" viewBox="0 0 24 24" style="display:block;"><rect x="2.5" y="10" width="19" height="5" fill="url(#gOr)" stroke="#6b3a00" stroke-width="0.9"/></svg></div>
<div class="ic" style="left:1725px"><svg width="24" height="24" viewBox="0 0 24 24" style="display:block;"><rect x="8.5" y="4.5" width="7.5" height="2.5" fill="url(#gOr)" stroke="#c07a30" stroke-width="0.6"/><rect x="8.5" y="17" width="7.5" height="2.5" fill="url(#gOr)" stroke="#c07a30" stroke-width="0.6"/></svg></div>
<div class="ic" style="left:1766px"><svg width="24" height="24" viewBox="0 0 24 24" style="display:block;"><path d="M5 4h14M5 21h14M5 4v17M19 4v17" stroke="#777" stroke-width="1" fill="none"/><path d="M5 12.5h14" stroke="#e08a2a" stroke-width="1.6"/><circle cx="5" cy="4" r="1.5" fill="#444"/><circle cx="19" cy="4" r="1.5" fill="#444"/><circle cx="5" cy="21" r="1.5" fill="#444"/><circle cx="19" cy="21" r="1.5" fill="#444"/><circle cx="5" cy="12.5" r="2.6" fill="url(#rOr)"/><circle cx="19" cy="12.5" r="2.6" fill="url(#rOr)"/></svg></div>
<div class="ic" style="left:1795px"><svg width="24" height="24" viewBox="0 0 24 24" style="display:block;"><g fill="url(#gOr)" stroke="#c07a30" stroke-width="0.5"><rect x="3.5" y="3" width="7.8" height="8.3"/><rect x="12.7" y="3" width="7.8" height="8.3"/><rect x="3.5" y="13" width="7.8" height="8.3"/><rect x="12.7" y="13" width="7.8" height="8.3"/></g><path d="M2.5 2.5h2M19.5 2.5h2M2.5 21.8h2M19.5 21.8h2M11.3 12.2h1.5M12 11.4v1.5" stroke="#222" stroke-width="0.9"/></svg></div>
<div class="ic" style="left:1824px"><svg width="24" height="24" viewBox="0 0 24 24" style="display:block;"><g stroke="#2a1a00" stroke-width="1" stroke-linejoin="round"><path d="M1.5 6.2L13.7 8.7L13.7 22L3.7 19.5Z" fill="#f5b530"/><path d="M1.5 6.2L12 2L22.3 3.7L13.7 8.7Z" fill="#e09a18"/><path d="M13.7 8.7L22.3 3.7L21.2 17L13.7 22Z" fill="#b87808"/></g><path d="M2.2 10.6L13.7 13.1M5.6 7.0L7.0 20.3M16.6 7.0L16.2 20.3M13.7 13.1L21.9 8.1M5.0 4.8L16.6 7.0M5.6 7.0L15.4 2.6M3.0 15.1L13.7 17.6M9.6 7.9L10.4 21.2M19.4 5.4L18.7 18.7M13.7 17.6L21.6 12.6M8.5 3.4L19.4 5.4M9.6 7.9L18.9 3.1" stroke="#2a1a00" stroke-width="0.9" fill="none"/></svg></div>
<div class="ic" style="left:1865px"><svg width="24" height="24" viewBox="0 0 24 24" style="display:block;"><ellipse cx="11" cy="14" rx="7.5" ry="3.5" fill="none" stroke="#d9801a" stroke-width="2" transform="rotate(-20 11 14)"/><path d="M5.5 22L17 6" stroke="#444" stroke-width="2.2"/><path d="M13.5 7.5l6-5.5-0.5 8z" fill="#444"/><path d="M12 17.5l4.5 0.5-1.5 2.5z" fill="#d9801a"/></svg></div>
<svg class="abs" style="left:1909px;top:56px" width="9" height="8" viewBox="0 0 9 8"><path d="M0.5 0.5l3 3.5-3 3.5M4.5 0.5l3 3.5-3 3.5" stroke="#444" stroke-width="1" fill="none"/></svg>
<div class="dt" style="left:0px;top:77px;width:225px;height:19px"></div>
<div class="t" style="left:5px;top:81px;letter-spacing:-0.25px;">Model Tree</div>
<svg class="abs" style="left:187px;top:81px" width="10" height="10" viewBox="0 0 10 10"><g fill="none" stroke="#333" stroke-width="1" shape-rendering="crispEdges"><path d="M1.5 4.5h5v4h-5z"/><path d="M3.5 4v-2.5h5v4.5h-2"/><path d="M1.5 5h5M3.5 2h5" stroke-width="1"/></g></svg>
<svg class="abs" style="left:208px;top:82px" width="9" height="9" viewBox="0 0 9 9"><path d="M1 1l7 7M8 1l-7 7" stroke="#222" stroke-width="1.7" fill="none"/></svg>
<div class="s" style="left:4px;top:107px;">Current View</div>
<div class="abs" style="left:72px;top:103px;width:148px;height:20px;background:#e1e1e1;border:1px solid #adadad"></div>
<div class="s" style="left:76px;top:107px;">Full Tree</div>
<svg class="abs" style="left:206px;top:110px" width="10" height="6" viewBox="0 0 10 6"><path d="M1 1l4 4 4-4" stroke="#333" stroke-width="1.1" fill="none"/></svg>
<div class="abs" style="left:5px;top:128px;width:215px;height:383px;background:#fff;border:1px solid #828790"></div>
<div class="t" style="left:10px;top:134px;letter-spacing:-0.08px;">Name</div>
<div class="t" style="left:160px;top:134px;letter-spacing:-0.50px;">Id</div>
<div class="abs" style="left:155px;top:129px;width:1px;height:23px;background:#e5e5e5"></div>
<svg class="abs" style="left:202px;top:129px" width="9" height="5" viewBox="0 0 9 5"><path d="M0.5 4.5l4-4 4 4" stroke="#555" stroke-width="1" fill="none"/></svg>
<div class="t" style="left:41px;top:156.0px;letter-spacing:-0.25px;">Volumes</div>
<div class="abs" style="left:19px;top:155.0px;width:16px;height:16px"><svg width="16" height="16" viewBox="0 0 16 16" style="display:block;"><g stroke="#0a0a0a" stroke-width="0.8" stroke-linejoin="round"><path d="M1.5 4.5l8 1.5v9L3 13z" fill="url(#gBl)"/><path d="M1.5 4.5l6-2.5 7 1.2L9.5 6z" fill="#3f6fa8"/><path d="M9.5 6l5-2.8-1 9L9.5 15z" fill="#12305f"/></g></svg></div>
<div class="t" style="left:41px;top:176.0px;letter-spacing:-0.44px;">Sheet Bodies</div>
<div class="abs" style="left:19px;top:175.0px;width:16px;height:16px"><svg width="16" height="16" viewBox="0 0 16 16" style="display:block;"><g stroke="#0a0a0a" stroke-width="0.7" stroke-linejoin="round"><path d="M6 3.5l5.5-2 4 1v5l-5 2.5-4.5-1.5z" fill="#1a3f75"/><path d="M6 3.5l5.5-2 4 1-5 2z" fill="#2a5590"/><path d="M1 8l4.5-2 3.5 1v6l-4 2.5L1.5 14z" fill="url(#gBl)"/><path d="M5 9l4-2v6l-4 2.5z" fill="#173a70"/></g></svg></div>
<svg class="abs" style="left:8px;top:179.0px" width="6" height="9" viewBox="0 0 6 9"><path d="M1 0.5l4 4-4 4" stroke="#a6a6a6" stroke-width="1.1" fill="none"/></svg>
<div class="t" style="left:41px;top:196.0px;letter-spacing:-0.55px;">Free Surfaces</div>
<div class="abs" style="left:19px;top:195.0px;width:16px;height:16px"><svg width="16" height="16" viewBox="0 0 16 16" style="display:block;"><path d="M2 1.5l11.5 1.5v12L4 12z" fill="url(#gBlD)" stroke="#0a1f4a" stroke-width="0.8"/></svg></div>
<svg class="abs" style="left:8px;top:199.0px" width="6" height="9" viewBox="0 0 6 9"><path d="M1 0.5l4 4-4 4" stroke="#a6a6a6" stroke-width="1.1" fill="none"/></svg>
<div class="t" style="left:41px;top:216.0px;letter-spacing:-0.54px;">Free Curves</div>
<div class="abs" style="left:19px;top:215.0px;width:16px;height:16px"><svg width="16" height="16" viewBox="0 0 16 16" style="display:block;"><path d="M3 15C3.5 8 7 3.5 14 2.5" fill="none" stroke="#1f4a8a" stroke-width="1.7" stroke-linecap="round"/></svg></div>
<svg class="abs" style="left:8px;top:219.0px" width="6" height="9" viewBox="0 0 6 9"><path d="M1 0.5l4 4-4 4" stroke="#a6a6a6" stroke-width="1.1" fill="none"/></svg>
<div class="t" style="left:41px;top:236.0px;letter-spacing:-0.38px;">Groups</div>
<div class="abs" style="left:19px;top:235.0px;width:16px;height:16px"><svg width="16" height="16" viewBox="0 0 16 16" style="display:block;"><g fill="#efe45a" stroke="#b8a820" stroke-width="0.5"><circle cx="8" cy="4.5" r="2.2" fill="#eee" stroke="#aaa"/><circle cx="4" cy="7.5" r="2.2"/><circle cx="12" cy="7.5" r="2.2"/><circle cx="8" cy="9" r="2.4"/><path d="M1 14c0-3 1.5-4 3-4s3 1 3 4zM9 14c0-3 1.5-4 3-4s3 1 3 4zM4.5 15.5c0-3 1.5-4.5 3.5-4.5s3.5 1.5 3.5 4.5z"/></g></svg></div>
<svg class="abs" style="left:8px;top:239.0px" width="6" height="9" viewBox="0 0 6 9"><path d="M1 0.5l4 4-4 4" stroke="#a6a6a6" stroke-width="1.1" fill="none"/></svg>
<div class="t" style="left:41px;top:256.0px;letter-spacing:-0.01px;">Boundary Conditions</div>
<div class="abs" style="left:19px;top:255.0px;width:16px;height:16px"><svg width="16" height="16" viewBox="0 0 16 16" style="display:block;"><rect x="0.5" y="0.5" width="15" height="15" fill="url(#gOrD)"/><path d="M8 0v16M0 8h16" stroke="#7a3a00" stroke-width="1.4"/><path d="M0.5 0.5h15v15h-15z" fill="none" stroke="#a85a10" stroke-width="1"/></svg></div>
<svg class="abs" style="left:8px;top:259.0px" width="6" height="9" viewBox="0 0 6 9"><path d="M1 0.5l4 4-4 4" stroke="#a6a6a6" stroke-width="1.1" fill="none"/></svg>
<div class="t" style="left:41px;top:276.0px;letter-spacing:-0.14px;">Materials</div>
<div class="abs" style="left:19px;top:275.0px;width:16px;height:16px"><svg width="16" height="16" viewBox="0 0 16 16" style="display:block;"><circle cx="8" cy="7" r="6.3" fill="url(#rOr)"/><circle cx="3.5" cy="12" r="2.2" fill="#ffd040" stroke="#a06000" stroke-width="0.5"/><circle cx="12.5" cy="13" r="2.2" fill="#ffd040" stroke="#a06000" stroke-width="0.5"/></svg></div>
<svg class="abs" style="left:8px;top:279.0px" width="6" height="9" viewBox="0 0 6 9"><path d="M1 0.5l4 4-4 4" stroke="#a6a6a6" stroke-width="1.1" fill="none"/></svg>
<div class="t" style="left:41px;top:296.0px;letter-spacing:-0.34px;">Blocks</div>
<div class="abs" style="left:19px;top:295.0px;width:16px;height:16px"><svg width="16" height="16" viewBox="0 0 16 16" style="display:block;"><g transform="scale(0.667)"><g stroke="#2a1a00" stroke-width="1" stroke-linejoin="round"><path d="M1.5 6.2L13.7 8.7L13.7 22L3.7 19.5Z" fill="#f5b530"/><path d="M1.5 6.2L12 2L22.3 3.7L13.7 8.7Z" fill="#e09a18"/><path d="M13.7 8.7L22.3 3.7L21.2 17L13.7 22Z" fill="#b87808"/></g><path d="M2.2 10.6L13.7 13.1M5.6 7.0L7.0 20.3M16.6 7.0L16.2 20.3M13.7 13.1L21.9 8.1M5.0 4.8L16.6 7.0M5.6 7.0L15.4 2.6M3.0 15.1L13.7 17.6M9.6 7.9L10.4 21.2M19.4 5.4L18.7 18.7M13.7 17.6L21.6 12.6M8.5 3.4L19.4 5.4M9.6 7.9L18.9 3.1" stroke="#2a1a00" stroke-width="0.9" fill="none"/></g></svg></div>
<div class="t" style="left:41px;top:316.0px;letter-spacing:-0.68px;">Side Sets</div>
<div class="abs" style="left:19px;top:315.0px;width:16px;height:16px"><svg width="16" height="16" viewBox="0 0 16 16" style="display:block;"><rect x="0.5" y="0.5" width="15" height="15" fill="url(#gOrD)"/><path d="M8 0v16M0 8h16" stroke="#7a3a00" stroke-width="1.4"/><path d="M0.5 0.5h15v15h-15z" fill="none" stroke="#a85a10" stroke-width="1"/></svg></div>
<div class="t" style="left:41px;top:336.0px;letter-spacing:-0.45px;">Node Sets</div>
<div class="abs" style="left:19px;top:335.0px;width:16px;height:16px"><svg width="16" height="16" viewBox="0 0 16 16" style="display:block;"><path d="M1.5 1.5h13v13h-13zM8 1.5v13" stroke="#5a3a1a" stroke-width="1" fill="none"/><path d="M1.5 8h13" stroke="#d97a20" stroke-width="1.2"/><g fill="#5a3a1a"><circle cx="1.5" cy="1.5" r="1.2"/><circle cx="8" cy="1.5" r="1.2"/><circle cx="14.5" cy="1.5" r="1.2"/><circle cx="1.5" cy="8" r="1.2"/><circle cx="8" cy="8" r="1.2"/><circle cx="14.5" cy="8" r="1.2"/><circle cx="1.5" cy="14.5" r="1.2"/><circle cx="8" cy="14.5" r="1.2"/><circle cx="14.5" cy="14.5" r="1.2"/></g></svg></div>
<div class="t" style="left:41px;top:356.0px;letter-spacing:-0.29px;">Boundary Layers</div>
<div class="abs" style="left:19px;top:355.0px;width:16px;height:16px"><svg width="16" height="16" viewBox="0 0 16 16" style="display:block;"><g transform="scale(0.667)"><g fill="#cbb6e6" stroke="#3a2a50" stroke-width="0.9"><rect x="3.5" y="2.5" width="2.6" height="19"/><rect x="6.1" y="2.5" width="2.6" height="19"/><rect x="3.5" y="16.3" width="18" height="2.6"/><rect x="3.5" y="18.9" width="18" height="2.6"/></g><path d="M14 2.5v14M3.5 8.5h18M8.7 2.5v19" stroke="#3a2a50" stroke-width="0.9" fill="none"/></g></svg></div>
<div class="t" style="left:41px;top:376.0px;letter-spacing:-0.42px;">Sizing Sources</div>
<div class="abs" style="left:19px;top:375.0px;width:16px;height:16px"><svg width="16" height="16" viewBox="0 0 16 16" style="display:block;"><g transform="scale(0.667)"><g stroke="#3a2060" stroke-width="0.7" stroke-linejoin="round"><path d="M4 7.8L12.3 10.3L12.3 22L4.8 17.8Z" fill="url(#gPu)"/><path d="M12.3 10.3L22.3 7L21.5 17L12.3 22Z" fill="#4a2a78"/><path d="M13.2 2.8L22.3 7L12.3 10.3L4 7.8Z" fill="#8a63b8"/></g><circle cx="12.3" cy="9.3" r="3.4" fill="#ececec"/><circle cx="11.6" cy="8.5" r="1.8" fill="#fff"/></g></svg></div>
<div class="abs" style="left:6px;top:494px;width:213px;height:16px;background:#f0f0f0"></div>
<div class="abs" style="left:23px;top:495px;width:152px;height:15px;background:#cdcdcd"></div>
<svg class="abs" style="left:11px;top:498px" width="6" height="9" viewBox="0 0 6 9"><path d="M5 0.5l-4 4 4 4" stroke="#555" stroke-width="1.5" fill="none"/></svg>
<svg class="abs" style="left:208px;top:498px" width="6" height="9" viewBox="0 0 6 9"><path d="M1 0.5l4 4-4 4" stroke="#555" stroke-width="1.5" fill="none"/></svg>
<div class="s" style="left:16px;top:516px;">Curve 60</div>
<div class="btn" style="left:185px;top:517px;width:21px;height:20px;border-color:#bdbdbd"><svg width="21" height="20" viewBox="0 0 21 20" style="display:block;position:absolute;left:-1px;top:-1px"><path d="M3.5 5v9.5c0 1.5 7 1.5 7 0V5" fill="#7fc41f" stroke="#4a7a00" stroke-width="0.5"/><ellipse cx="7" cy="5" rx="3.5" ry="1.7" fill="#b5e85a" stroke="#4a7a00" stroke-width="0.5"/><path d="M6.3 10l1-2.3h2.2l0.8 2.3v6.5h-4zM11.8 10l0.8-2.3h2.2l1 2.3v6.5h-4zM10.3 10.8h1.5v2.7h-1.5z" fill="#000"/><rect x="7" y="13.8" width="2" height="1.8" fill="#fff"/><rect x="12.8" y="13.8" width="2" height="1.8" fill="#fff"/></svg></div>
<div class="dt" style="left:0px;top:548px;width:225px;height:19px"></div>
<div class="t" style="left:5px;top:552px;letter-spacing:-0.27px;">Properties Page</div>
<svg class="abs" style="left:187px;top:552px" width="10" height="10" viewBox="0 0 10 10"><g fill="none" stroke="#333" stroke-width="1" shape-rendering="crispEdges"><path d="M1.5 4.5h5v4h-5z"/><path d="M3.5 4v-2.5h5v4.5h-2"/><path d="M1.5 5h5M3.5 2h5" stroke-width="1"/></g></svg>
<svg class="abs" style="left:208px;top:553px" width="9" height="9" viewBox="0 0 9 9"><path d="M1 1l7 7M8 1l-7 7" stroke="#222" stroke-width="1.7" fill="none"/></svg>
<div class="gb" style="left:5px;top:580px;width:215px;height:45px"></div>
<div class="gbl" style="left:11px;top:574px">Perform Action</div>
<div class="btn" style="left:12px;top:594px;width:27px;height:26px;border-color:#c4c4c4"><svg width="27" height="26" viewBox="0 0 27 26" style="display:block;position:absolute;left:-1px;top:-1px"><rect x="3" y="3" width="19.6" height="19.6" fill="url(#gPg3)"/><path d="M9.5 3v19.6M16.1 3v19.6M3 9.5h19.6M3 16.1h19.6" stroke="#f3e6fb" stroke-width="0.8"/><path d="M4.9 13.5l1-2h2.3l1 2v6H4.9zM11.6 13.5l1-2h2.3l1 2v6h-4.3zM9.2 14.5h2.4v2.5H9.2z" fill="#000"/><rect x="5.8" y="16.6" width="2.4" height="2" fill="#fff"/><rect x="12.5" y="16.6" width="2.4" height="2" fill="#fff"/></svg></div>
<div class="btn" style="left:41px;top:594px;width:27px;height:26px;border-color:#c4c4c4"><svg width="27" height="26" viewBox="0 0 27 26" style="display:block;position:absolute;left:-1px;top:-1px"><rect x="2.8" y="3.0" width="6.7" height="6.55" fill="url(#gPd)" stroke="#2a0a3a" stroke-width="0.7"/><rect x="2.8" y="9.6" width="6.7" height="6.55" fill="url(#gPd)" stroke="#2a0a3a" stroke-width="0.7"/><rect x="2.8" y="16.1" width="6.7" height="6.55" fill="url(#gPd)" stroke="#2a0a3a" stroke-width="0.7"/><rect x="9.5" y="9.6" width="6.7" height="6.55" fill="url(#gPd)" stroke="#2a0a3a" stroke-width="0.7"/><rect x="9.5" y="16.1" width="6.7" height="6.55" fill="url(#gPd)" stroke="#2a0a3a" stroke-width="0.7"/><rect x="16.2" y="16.1" width="6.7" height="6.55" fill="url(#gPd)" stroke="#2a0a3a" stroke-width="0.7"/><path d="M16 3.6h1.2M22 3.6h1.2M22 9.8h1.2" stroke="#111" stroke-width="1.2"/></svg></div>
<div class="btn" style="left:70px;top:594px;width:27px;height:26px;border-color:#c4c4c4"><svg width="27" height="26" viewBox="0 0 27 26" style="display:block;position:absolute;left:-1px;top:-1px"><path d="M3 22c1-5 3-10 6.5-13.5 5-1.8 10-1.5 13 0 1 2.5 1.3 5 1.3 7.5z" fill="url(#rPu)" stroke="#5a1a8a" stroke-width="0.7"/><path d="M3 22l20.8-6v1.8L3.5 23.8z" fill="#a8d8c8" stroke="#6aa08a" stroke-width="0.5"/><path d="M9 12.5c3.5-2 8-2.5 11.5-1.2-1 1.5-2.5 2.7-5 3.2s-5 0-6.5-2z" fill="#7a1aa8"/><path d="M10.5 9.5c3-1 7-1 10 0" stroke="#f0c8ff" stroke-width="1.2" fill="none"/></svg></div>
<div class="btn" style="left:99px;top:594px;width:27px;height:26px;border-color:#c4c4c4"><svg width="27" height="26" viewBox="0 0 27 26" style="display:block;position:absolute;left:-1px;top:-1px"><circle cx="13.5" cy="9.5" r="6" fill="url(#rPu)" stroke="#7a2ab0" stroke-width="0.8" stroke-dasharray="1.5 0.7"/><circle cx="13.5" cy="9.5" r="3.4" fill="#d9a8f5" stroke="#8a3ac0" stroke-width="0.6"/><path d="M10.8 15l-1.8 8 3-2 1.5 2zM16.2 15l1.8 8-3-2-1.5 2z" fill="#a048d8" stroke="#6a1a9a" stroke-width="0.5"/></svg></div>
<div class="btn" style="left:128px;top:594px;width:27px;height:26px;border-color:#c4c4c4"><svg width="27" height="26" viewBox="0 0 27 26" style="display:block;position:absolute;left:-1px;top:-1px"><rect x="2.7" y="3" width="19.8" height="19.8" fill="url(#gPd)"/><path d="M9.3 3v19.8M15.9 3v19.8M2.7 9.6h19.8M2.7 16.2h19.8" stroke="#3a1a4a" stroke-width="0.8"/><path d="M10.4 3.7l11.6 11M22 3.7l-11.6 11" stroke="#d01020" stroke-width="2.3"/></svg></div>
<div class="btn" style="left:157px;top:594px;width:27px;height:26px;border-color:#c4c4c4"><svg width="27" height="26" viewBox="0 0 27 26" style="display:block;position:absolute;left:-1px;top:-1px"><path d="M3 11.5C4 6.5 10 4.5 15.5 6.5l0.5-3.3 7 5.8-8.5 3.5 0.5-3C11 8.5 7.5 9.5 6.5 12.5z" fill="url(#gPd)" stroke="#1a0a2a" stroke-width="0.9" stroke-linejoin="round"/><path d="M24 14.5c-1 5-7 7-12.5 5l-0.5 3.3-7-5.8 8.5-3.5-0.5 3c4 1 7.5 0 8.5-3z" fill="url(#gPd)" stroke="#1a0a2a" stroke-width="0.9" stroke-linejoin="round"/></svg></div>
<div class="btn" style="left:186px;top:594px;width:27px;height:26px;border-color:#c4c4c4"><svg width="27" height="26" viewBox="0 0 27 26" style="display:block;position:absolute;left:-1px;top:-1px"><path d="M4.5 7l3.3-3.2 5.4 5.7 6-5.8 3.3 3.4-5.8 5.7 6 6.2-3.4 3.2-6-6-5.6 6.3-3.6-3.2 5.7-6.2z" fill="url(#gPd)" stroke="#2a0a3a" stroke-width="1" stroke-linejoin="round"/></svg></div>
<div class="abs" style="left:5px;top:632px;width:215px;height:375px;background:#fff;border:1px solid #828790;overflow:hidden"></div>
<div class="t" style="left:10px;top:638px;letter-spacing:-0.14px;">Property</div>
<div class="t" style="left:150px;top:638px;letter-spacing:-0.40px;">Value</div>
<div class="abs" style="left:145px;top:633px;width:1px;height:23px;background:#e5e5e5"></div>
<div class="abs" style="left:203px;top:633px;width:16px;height:373px;background:#f0f0f0"></div>
<div class="abs" style="left:204px;top:650px;width:14px;height:322px;background:#cdcdcd"></div>
<svg class="abs" style="left:206px;top:638px" width="9" height="6" viewBox="0 0 9 6"><path d="M0.5 5l4-4 4 4" stroke="#555" stroke-width="1.5" fill="none"/></svg>
<svg class="abs" style="left:206px;top:994px" width="9" height="6" viewBox="0 0 9 6"><path d="M0.5 1l4 4 4-4" stroke="#555" stroke-width="1.5" fill="none"/></svg>
<div class="abs" style="left:6px;top:656px;width:197px;height:350px;overflow:hidden">
<svg class="abs" style="left:1px;top:6px" width="9" height="6" viewBox="0 0 9 6"><path d="M0.5 0.5l4 4 4-4" stroke="#404040" stroke-width="1.7" fill="none"/></svg>
<div class="t" style="left:13px;top:1.5px;letter-spacing:-0.48px;">General</div>
<div class="abs" style="left:20px;top:17px;width:177px;height:17px;background:#f5f5f5"></div>
<div class="t" style="left:23px;top:18.5px;letter-spacing:-0.50px;">Id</div>
<div class="t" style="left:143px;top:18.5px;letter-spacing:-0.77px;">61 60</div>
<div class="t" style="left:23px;top:35.5px;letter-spacing:-0.60px;">Type</div>
<div class="t" style="left:143px;top:35.5px;letter-spacing:-0.36px;">Curve</div>
<div class="abs" style="left:20px;top:51px;width:177px;height:17px;background:#f5f5f5"></div>
<div class="t" style="left:23px;top:52.5px;letter-spacing:-0.08px;">Name</div>
<div class="t" style="left:23px;top:69.5px;letter-spacing:-0.28px;">Idless Signature</div>
<div class="t" style="left:143px;top:69.5px;letter-spacing:-0.34px;">calc</div>
<div class="abs" style="left:20px;top:85px;width:177px;height:17px;background:#f5f5f5"></div>
<div class="t" style="left:23px;top:86.5px;letter-spacing:0.00px;">Color</div>
<div class="t" style="left:143px;top:86.5px;letter-spacing:0.01px;">default</div>
<div class="t" style="left:23px;top:103.5px;letter-spacing:-0.02px;">Location</div>
<div class="t" style="left:143px;top:103.5px;letter-spacing:-0.19px;">Too many</div>
<div class="abs" style="left:10px;top:119px;width:187px;height:17px;background:#f5f5f5"></div>
<svg class="abs" style="left:1px;top:125px" width="9" height="6" viewBox="0 0 9 6"><path d="M0.5 0.5l4 4 4-4" stroke="#404040" stroke-width="1.7" fill="none"/></svg>
<div class="t" style="left:13px;top:120.5px;letter-spacing:-0.20px;">Geometry</div>
<div class="t" style="left:23px;top:137.5px;letter-spacing:-0.22px;">Is Merged</div>
<div class="t" style="left:143px;top:137.5px;letter-spacing:-0.37px;">No</div>
<div class="abs" style="left:20px;top:153px;width:177px;height:17px;background:#f5f5f5"></div>
<div class="t" style="left:23px;top:154.5px;letter-spacing:-0.19px;">Is Virtual</div>
<div class="t" style="left:143px;top:154.5px;letter-spacing:-0.37px;">No</div>
<div class="t" style="left:23px;top:171.5px;letter-spacing:-0.26px;">Engine</div>
<div class="t" style="left:143px;top:171.5px;letter-spacing:-1.00px;">ACIS</div>
<div class="abs" style="left:20px;top:187px;width:177px;height:17px;background:#f5f5f5"></div>
<div class="t" style="left:23px;top:188.5px;letter-spacing:-0.08px;">Analytic Type</div>
<svg class="abs" style="left:1px;top:210px" width="9" height="6" viewBox="0 0 9 6"><path d="M0.5 0.5l4 4 4-4" stroke="#404040" stroke-width="1.7" fill="none"/></svg>
<div class="t" style="left:13px;top:205.5px;letter-spacing:-0.02px;">Meshing</div>
<div class="abs" style="left:20px;top:221px;width:177px;height:17px;background:#f5f5f5"></div>
<div class="t" style="left:23px;top:222.5px;letter-spacing:-0.30px;">Is Meshed</div>
<div class="t" style="left:143px;top:222.5px;letter-spacing:-1.23px;">Yes</div>
<div class="t" style="left:23px;top:239.5px;letter-spacing:-0.29px;">Requested Intervals</div>
<div class="t" style="left:143px;top:239.5px;letter-spacing:-0.90px;">6 (S)</div>
<div class="abs" style="left:20px;top:255px;width:177px;height:17px;background:#f5f5f5"></div>
<div class="t" style="left:23px;top:256.5px;letter-spacing:-0.49px;">Requested Size</div>
<div class="t" style="left:143px;top:256.5px;letter-spacing:-0.52px;">10 (N)</div>
<div class="t" style="left:23px;top:273.5px;letter-spacing:-0.08px;">Actual Intervals</div>
<div class="t" style="left:143px;top:273.5px;">6</div>
<div class="abs" style="left:20px;top:289px;width:177px;height:17px;background:#f5f5f5"></div>
<div class="t" style="left:23px;top:290.5px;letter-spacing:-0.30px;">Actual Size</div>
<div class="t" style="left:143px;top:290.5px;letter-spacing:-0.74px;">Varies</div>
<div class="t" style="left:23px;top:307.5px;letter-spacing:0.04px;">Number of Nodes</div>
<div class="t" style="left:143px;top:307.5px;letter-spacing:-1.37px;">12</div>
<div class="abs" style="left:20px;top:323px;width:177px;height:17px;background:#f5f5f5"></div>
<div class="t" style="left:23px;top:324.5px;letter-spacing:-0.04px;">Length of Curve</div>
<div class="t" style="left:143px;top:324.5px;letter-spacing:-0.77px;">125.664</div>
<div class="t" style="left:23px;top:341.5px;">Mesh Scheme</div>
<div class="t" style="left:143px;top:341.5px;">Equal</div>
</div>
<svg class="abs" style="left:229px;top:76px" width="1417" height="674" viewBox="229 76 1417 674">
<defs><radialGradient id="mHi" gradientUnits="userSpaceOnUse" cx="520" cy="790" r="250" gradientTransform="translate(520 790) scale(1.7 1) translate(-520 -790)"><stop offset="0" stop-color="#00ee00" stop-opacity="1"/><stop offset="0.4" stop-color="#00dc00" stop-opacity="0.6"/><stop offset="1" stop-color="#00c800" stop-opacity="0"/></radialGradient><linearGradient id="mBr" gradientUnits="userSpaceOnUse" x1="0" y1="200" x2="0" y2="750"><stop offset="0" stop-color="#00b800"/><stop offset="0.35" stop-color="#00c200"/><stop offset="1" stop-color="#00cc00"/></linearGradient><linearGradient id="mUp" gradientUnits="userSpaceOnUse" x1="300" y1="0" x2="1500" y2="0"><stop offset="0" stop-color="#009800"/><stop offset="1" stop-color="#009e00"/></linearGradient><linearGradient id="mDk" gradientUnits="userSpaceOnUse" x1="400" y1="0" x2="950" y2="0"><stop offset="0" stop-color="#006e00"/><stop offset="0.5" stop-color="#005600"/><stop offset="1" stop-color="#004e00"/></linearGradient><linearGradient id="mRb" gradientUnits="userSpaceOnUse" x1="1570" y1="150" x2="1645" y2="130"><stop offset="0" stop-color="#008e00"/><stop offset="1" stop-color="#005e00"/></linearGradient></defs>
<rect x="229" y="76" width="1417" height="674" fill="#00b800"/>
<polygon points="444,219 428,234 416,252 412.75,271.75 414,295 424,334.75 446.5,399.75 469.5,463.5 492.75,526.75 515.25,590.5 548.5,651.5 580,680 614,689.75 654,694.75 686.5,691.75 709,689.75 759,682.75 831,673.5 902.75,663.5 974.5,654.75 1046.5,646 1118.5,636 1189.5,627.25 1262,618 1334,608 1349,596 1387.75,567.25 1440.25,524 1494,482.25 1549,442.25 1611.5,409.75 1646,472.25 1646,750 229,750 229,318.5 325.25,270.5 389,191.5" fill="url(#mBr)" />
<polygon points="444,219 428,234 416,252 412.75,271.75 414,295 424,334.75 446.5,399.75 469.5,463.5 492.75,526.75 515.25,590.5 548.5,651.5 580,680 614,689.75 654,694.75 686.5,691.75 709,689.75 759,682.75 831,673.5 902.75,663.5 974.5,654.75 1046.5,646 1118.5,636 1189.5,627.25 1262,618 1334,608 1349,596 1387.75,567.25 1440.25,524 1494,482.25 1549,442.25 1611.5,409.75 1646,472.25 1646,750 229,750 229,318.5 325.25,270.5 389,191.5" fill="url(#mHi)" />
<polygon points="1387.75,676 1438.5,639.75 1491,601.5 1544,563 1599,526 1646,500.5 1646,599.75 1623.5,611 1571,648.5 1519.5,687.25 1468.5,724.75 1432.75,750 1414,750" fill="#00b000" />
<polygon points="1596.5,750 1614,735.5 1646,711 1646,750" fill="#00b800" />
<polygon points="394,76 1646,76 1646,472.25 1611.5,409.75 1589,343.5 1586.5,336 1564,277.25 1541.5,211 1517.75,144 1442.75,121.5 1371.5,86.5 1300.25,96 1227.75,105.5 1156.5,114.75 1084,123.5 1012.75,133 940.25,142.25 869,152.25 797.75,161.5 726.5,170.5 654,181 581.5,189.75 509,199 470,206 444,219 389,191.5 325.25,270.5 281.5,232.25 255.25,212.25 276.5,182.25 330.25,167.25 240.25,157.25 262,135 289,115.5 318,98 351.5,84.75" fill="url(#mUp)" />
<polygon points="389,191.5 459,157.25 529,141.5 600.25,128.5 670.25,116 741.5,105.5 814,94 885.25,84.75 949,76 1381.5,76 1371.5,86.5 1300.25,96 1227.75,105.5 1156.5,114.75 1084,123.5 1012.75,133 940.25,142.25 869,152.25 797.75,161.5 726.5,170.5 654,181 581.5,189.75 509,199 472.5,203.3 444,219" fill="#009f00" />
<polygon points="330.25,167.25 403.25,128.5 459,157.25 389,191.5" fill="#008600" />
<polygon points="389,191.5 459,157.25 509,199 472.5,203.3 444,219" fill="#00a600" />
<polygon points="403.25,128.5 475.25,113 546.5,101 615.25,88.5 679,78.5 693,76 949,76 885.25,84.75 814,94 741.5,105.5 670.25,116 600.25,128.5 529,141.5 459,157.25" fill="url(#mDk)" />
<polygon points="229,212.5 255.25,212.5 280,231 229,217" fill="#008c00" />
<polygon points="229,254.75 281.5,232.25 325.25,270.5 229,271" fill="#009800" />
<polygon points="241.5,157.5 329,167.25 276.5,182.25" fill="#00c400" />
<polygon points="1517.75,144 1541.5,211 1564,277.25 1586.5,336 1589,343.5 1611.5,409.75 1646,401 1646,321 1622.75,262.25 1599,201 1577.75,146" fill="#00a400" />
<polygon points="1562.75,107.25 1577.75,146 1599,201 1622.75,262.25 1646,321 1646,211 1634,175 1617.75,143 1585.25,97.25" fill="url(#mRb)" />
<polygon points="1474,76 1517.75,92.25 1562.75,107.25 1585.25,97.25 1545,76" fill="#006a00" />
<polygon points="1545,76 1585.25,97.25 1617.75,143 1634,175 1646,211 1646,148.5 1604,94 1568,76" fill="#003c00" />
<polygon points="1568,76 1604,94 1629,76" fill="#008400" />
<polygon points="1629,76 1604,94 1646,148.5 1646,76" fill="#008000" />
<path d="M972.75 259.25C997.5 256.1 1027.5 258.5 1052.75 266.5C1078.0 274.5 1104.8 289.6 1124 307.25C1143.2 324.9 1159.8 350.0 1167.75 372.25C1175.7 394.5 1177.1 420.4 1171.5 441C1165.9 461.6 1151.5 482.5 1134 496C1116.5 509.5 1091.1 519.1 1066.5 522.25C1041.9 525.4 1011.7 522.7 986.5 514.75C961.3 506.8 934.4 492.5 915.25 474.75C896.1 457.0 879.2 431.2 871.5 408.5C863.8 385.8 863.6 359.0 869 338.5C874.4 318.0 886.7 298.7 904 285.5C921.3 272.3 948.0 262.4 972.75 259.25Z" fill="none" stroke="#f0a020" stroke-width="2.6"/>
<polygon points="972.75,259.25 1052.75,266.5 1124,307.25 1167.75,372.25 1171.5,441 1134,496 1066.5,522.25 986.5,514.75 915.25,474.75 871.5,408.5 869,338.5 904,285.5" fill="#ffffff" stroke="#000" stroke-width="2.1" stroke-linejoin="round" shape-rendering="crispEdges"/>
<path d="M261.5 76 L289 115.5 L330.25 167.25 L389 191.5 L444 219 L485.25 263 L538.25 269.75M346.5 76 L351.5 84.75 L403.25 128.5 L459 157.25 L509 199 L538.25 269.75 L526.5 327.25M429 76 L475.25 113 L529 141.5 L581.5 189.75 L625.25 299.25 L609 336 L587 381.75M514 76 L546.5 101 L600.25 128.5 L654 181 L701.5 266 L709 274.75 L759 336 L769 343.5M599 76 L615.25 88.5 L670.25 116 L709 148.5 L726.5 170.5 L765.25 239.75 L810.25 297.25 L861.5 336M676 76 L679 78.5 L709 89.75 L741.5 105.5 L797.75 161.5 L825.25 221 L846 268.5 L810.25 297.25 L776.5 336 L769 343.5M330.25 167.25 L403.25 128.5 L475.25 113 L546.5 101 L615.25 88.5 L679 78.5 L693 76M389 191.5 L459 157.25 L529 141.5 L600.25 128.5 L670.25 116 L709 108.5 L741.5 105.5 L814 94 L885.25 84.75 L949 76M229 145.5 L240.25 157.25 L276.5 182.25 L255.25 212.25 L281.5 232.25 L325.25 270.5M276.5 182.25 L330.25 167.25M229 212.25 L255.25 212.25M330.25 167.25 L281.5 232.25 L229 254.75M389 191.5 L325.25 270.5 L229 318.5M325.25 270.5 L412.75 271.75M325.25 270.5 L329 336 L329 359.75 L356.5 442.25 L353.25 525.25 L367 593.5 L367.75 596 L385.25 656 L401.5 716.75 L411.5 750M412.75 271.75 L472.75 299.75 L526.5 327.25 L532.75 336 L587 381.75 L646.5 467.25 L709 492.25 L737.75 504.75 L804 539 L849 574.75 L865.25 596 L879.5 617.25 L902.75 663.5 L899 737.75 L897 750M485.25 263 L472.75 299.75 L464 334.75 L495.25 372.25 L531.5 430.5 L560.25 499.25 L574 566 L582.75 596 L586.5 613.5M464 334.75 L424 334.75M538.25 269.75 L625.25 299.25 L659 336 L709 391M625.25 299.25 L701.5 266 L709 262 L765.25 239.75 L825.25 221 L889.5 216 L959 204.75 L1032.75 202.25 L1106.5 204 L1181.5 193.5 L1189 193.5 L1255.25 182.25 L1323.5 166.5 L1378.25 151M444 219 L412.75 271.75 L424 334.75M767.75 76 L814 94 L869 152.25 L889.5 216 L904 285.5M862.75 76 L885.25 84.75 L940.25 142.25 L959 204.75 L972.75 259.25M959 76 L1012.75 133 L1032.75 202.25 L1052.75 266.5M1039 76 L1084 123.5 L1106.5 204 L1124 307.25M1121.5 76 L1156.5 114.75 L1181.5 193.5 L1189 216 L1209 281.5 L1234 336 L1242.75 360.25 L1267.75 443.5 L1289 525.5 L1326.5 596 L1334 608 L1387.75 676 L1414 750M846 268.5 L904 285.5M1124 307.25 L1189 288.5 L1209 281.5 L1289 261 L1364.75 236 L1440.25 201M1199 76 L1227.75 105.5 L1255.25 182.25 L1289 261 L1321.5 336 L1324.5 345.5 L1365.25 446.75 L1347 513M1279 76 L1300.25 96 L1323.5 166.5 L1364.75 236 L1404 319 L1411.5 336 L1442.75 404 L1494 482.25 L1544 563 L1555.25 596 L1571 648.5 L1614 735.5 L1627.75 750M1359 76 L1371.5 86.5 L1378.25 151 L1440.25 201 L1480.25 292.25 L1500.25 336 L1514 369.75 L1549 442.25 L1599 526 L1611.5 561 L1619 596 L1623.5 611 L1646 654.75M1381.5 76 L1371.5 86.5M1459 76 L1442.75 121.5 L1440.25 201M1474 76 L1517.75 92.25 L1517.75 144M1529 76 L1517.75 92.25 L1562.75 107.25 L1585.25 97.25 L1604 94 L1629 76M1545 76 L1585.25 97.25M1562.75 107.25 L1599 201 L1622.75 262.25 L1646 321M1517.75 144 L1577.75 146 L1617.75 143 L1646 142.25M1541.5 211 L1599 201 L1646 198.5M1564 277.25 L1622.75 262.25 L1646 261.5M1585.25 97.25 L1617.75 143 L1634 175 L1646 211M1604 94 L1646 148.5M1351.5 336 L1404 319 L1480.25 292.25 L1564 277.25M1440.25 201 L1541.5 211M1646 327.25 L1619 336 L1589 343.5 L1514 369.75 L1442.75 404 L1365.25 446.75 L1267.75 443.5 L1189 441 L1171.5 441M229 400.5 L329 359.75 L424 336M229 468.5 L240.25 470.25 L356.5 442.25 L446.5 399.75 L495.25 372.25 L520.25 336 L526.5 327.25M229 434.75 L240.25 470.25 L264 535.25 L285.25 596 L287 601 L310.25 666.5 L337.75 731 L350.25 750M356.5 442.25 L416.5 474.25 L469.5 463.5 L531.5 430.5 L587 381.75 L609 336M416.5 474.25 L424 527.25 L440.25 586.75 L442.75 596 L457.75 648.5 L464 715.5 L462.75 750M709 392.25 L646.5 467.25 L560.25 499.25 L492.75 526.75 L424 527.25 L353.25 525.25 L264 535.25 L229 531.75M646.5 467.25 L641.5 558.5 L640.25 596 L639 621.75 L614 689.75 L609 744.75 L608.5 750M574 566 L641.5 558.5 L709 566 L774 579.75 L816.5 594.75M574 566 L515.25 590.5 L440.25 586.75 L367 593.5 L336.5 596 L287 601 L229 596M769 343.5 L709 392.25M769 343.5 L871.5 408.5M709 392.25 L792.75 451 L854 502.25 L906.5 548.5 L939 596 L944 601.5 L974.5 654.75 L971.5 731 L968.5 750M871.5 408.5 L792.75 451 L737.75 504.75 L711 568 L704 596 L702.75 626 L686.5 691.75 L682.75 750M915.25 474.75 L854 502.25 L804 539 L774 579.75 L770.25 596 L765.25 628.5 L759 682.75 L755.25 750M986.5 514.75 L906.5 548.5 L849 574.75 L816.5 594.75 L816.5 596 L824.5 629.25 L831 673.5 L826.5 743.5 L826 750M986.5 514.75 L1016.5 584 L1021.5 596 L1046.5 646 L1042.75 726.5 L1039 750M1066.5 522.25 L1091.5 576 L1099 596 L1118.5 636 L1112.75 723.5 L1109 750M1134 496 L1159 561 L1176.5 596 L1189.5 627.25 L1181.5 722.25 L1176.5 750M1171.5 441 L1189 474.75 L1221.5 538.5 L1251.5 596 L1262 618 L1242 728.5 L1240.25 750M1167.75 372.25 L1189 368.5 L1242.75 360.25 L1324.5 345.5 L1355.25 336M964 596 L1016.5 584 L1091.5 576 L1159 561 L1189 551 L1221.5 538.5 L1289 525.5 L1347 513M709 626 L765.25 628.5 L824.5 629.25 L879.5 617.25 L944 601.5 L967.75 596M1365.25 446.75 L1440.25 524 L1487.75 596 L1491 601.5 L1519.5 687.25 L1549 750M1347 513 L1387.75 567.25 L1409 596 L1438.5 639.75 L1468.5 724.75 L1480.25 750M1611.5 409.75 L1646 401M1589 343.5 L1611.5 409.75 L1646 472.25M1599 526 L1646 500.5M1599 526 L1544 563 L1499 596 L1491 601.5 L1438.5 639.75 L1387.75 676 L1334.75 709.25 L1292.75 747.75M229 676 L310.25 666.5 L385.25 656 L457.75 648.5 L548.5 651.5M548.5 651.5 L586.5 613.5 L639 621.75 L709 626M548.5 651.5 L536.5 724.75 L534 750M548.5 651.5 L614 689.75M286.5 750 L337.75 731 L401.5 716.75 L464 715.5 L536.5 724.75 L609 744.75 L659 750M229 717.25 L252.75 750M756.5 750 L826.5 743.5 L899 737.75 L971.5 731 L1042.75 726.5 L1112.75 723.5 L1181.5 722.25 L1189 723.5 L1242 728.5 L1292.75 747.75M1262 618 L1300 664 L1334.75 709.25 L1347 750M1432.75 750 L1468.5 724.75 L1519.5 687.25 L1571 648.5 L1623.5 611 L1646 599.75" fill="none" stroke="#000" stroke-width="2.1" stroke-linejoin="round" shape-rendering="crispEdges"/>
<path d="M444 219 L475 206 L509 199 L581.5 189.75 L654 181 L726.5 170.5 L797.75 161.5 L869 152.25 L940.25 142.25 L1012.75 133 L1084 123.5 L1156.5 114.75 L1227.75 105.5 L1300.25 96 L1371.5 86.5" fill="none" stroke="#000" stroke-width="2.1" shape-rendering="crispEdges"/>
<path d="M444 219 L475 206 L509 199 L581.5 189.75 L654 181 L726.5 170.5 L797.75 161.5 L869 152.25 L940.25 142.25 L1012.75 133 L1084 123.5 L1156.5 114.75 L1227.75 105.5 L1300.25 96 L1371.5 86.5" fill="none" stroke="#20d020" stroke-width="1" stroke-dasharray="2 4" shape-rendering="crispEdges"/>
<path d="M1371.5 86.5 L1442.75 121.5 L1517.75 144 L1541.5 211 L1564 277.25 L1586.5 336 L1589 343.5 L1611.5 409.75" fill="none" stroke="#000" stroke-width="2.1" shape-rendering="crispEdges"/>
<path d="M1371.5 86.5 L1442.75 121.5 L1517.75 144 L1541.5 211 L1564 277.25 L1586.5 336 L1589 343.5 L1611.5 409.75" fill="none" stroke="#20d020" stroke-width="1" stroke-dasharray="2 4" shape-rendering="crispEdges"/>
<path d="M1611.5 409.75 L1549 442.25 L1494 482.25 L1440.25 524 L1387.75 567.25 L1349 596 L1334 608 L1262 618 L1189.5 627.25 L1118.5 636 L1046.5 646 L974.5 654.75 L902.75 663.5 L831 673.5 L759 682.75 L709 689.75 L686.5 691.75 L654 694.75 L614 689.75" fill="none" stroke="#000" stroke-width="2.1" shape-rendering="crispEdges"/>
<path d="M1611.5 409.75 L1549 442.25 L1494 482.25 L1440.25 524 L1387.75 567.25 L1349 596 L1334 608 L1262 618 L1189.5 627.25 L1118.5 636 L1046.5 646 L974.5 654.75 L902.75 663.5 L831 673.5 L759 682.75 L709 689.75 L686.5 691.75 L654 694.75 L614 689.75" fill="none" stroke="#20d020" stroke-width="1" stroke-dasharray="2 4" shape-rendering="crispEdges"/>
<path d="M1596.5 750 L1614 735.5 L1646 711" fill="none" stroke="#000" stroke-width="2.1" shape-rendering="crispEdges"/>
<path d="M1596.5 750 L1614 735.5 L1646 711" fill="none" stroke="#20d020" stroke-width="1" stroke-dasharray="2 4" shape-rendering="crispEdges"/>
<path d="M424 334.75 L446.5 399.75 L469.5 463.5 L492.75 526.75 L515.25 590.5 L516.5 596 L548.5 651.5" fill="none" stroke="#000" stroke-width="2.1" shape-rendering="crispEdges"/>
<path d="M424 334.75 L446.5 399.75 L469.5 463.5 L492.75 526.75 L515.25 590.5 L516.5 596 L548.5 651.5" fill="none" stroke="#20d020" stroke-width="1" stroke-dasharray="2 4" shape-rendering="crispEdges"/>
<path d="M444 219C441.3 221.5 432.7 228.5 428 234C423.3 239.5 418.5 245.7 416 252C413.5 258.3 413.1 264.6 412.75 271.75C412.4 278.9 412.1 284.5 414 295C415.9 305.5 422.3 328.1 424 334.75" fill="none" stroke="#000" stroke-width="2"/>
<path d="M548.5 651.5C551.2 654.2 559.8 663.2 565 668C570.2 672.8 574.7 676.8 580 680C585.3 683.2 591.3 685.4 597 687C602.7 688.6 611.2 689.3 614 689.75" fill="none" stroke="#000" stroke-width="2"/>
<path d="M229 173.5C230.9 170.8 234.8 163.7 240.25 157.25C245.8 150.8 253.9 142.0 262 135C270.1 128.0 279.7 121.7 289 115.5C298.3 109.3 307.6 103.1 318 98C328.4 92.9 338.8 88.4 351.5 84.75C364.2 81.1 386.9 77.5 394 76" fill="none" stroke="#000" stroke-width="2"/>
<path d="M444 219C446.2 217.4 452.2 212.1 457 209.5C461.8 206.9 467.0 204.9 472.5 203.3C478.0 201.7 483.9 200.7 490 200C496.1 199.3 505.8 199.2 509 199" fill="none" stroke="#000" stroke-width="2"/>
</svg>
<div class="dt" style="left:229px;top:755px;width:1416px;height:19px"></div>
<div class="t" style="left:234px;top:759px;letter-spacing:0.01px;">Command Line</div>
<svg class="abs" style="left:1608px;top:760px" width="10" height="10" viewBox="0 0 10 10"><g fill="none" stroke="#333" stroke-width="1" shape-rendering="crispEdges"><path d="M1.5 4.5h5v4h-5z"/><path d="M3.5 4v-2.5h5v4.5h-2"/><path d="M1.5 5h5M3.5 2h5" stroke-width="1"/></g></svg>
<svg class="abs" style="left:1630px;top:761px" width="9" height="9" viewBox="0 0 9 9"><path d="M1 1l7 7M8 1l-7 7" stroke="#222" stroke-width="1.7" fill="none"/></svg>
<div class="abs" style="left:233px;top:780px;width:1407px;height:213px;background:#fff;border:1px solid #0078d7"></div>
<svg class="abs" style="left:234px;top:781px" width="200" height="50" viewBox="234 781 200 50"><text x="238.6" y="812" font-family="Liberation Mono" font-size="30" fill="#000" stroke="#fff" stroke-width="0.65" letter-spacing="0.95">Cubit&gt;</text></svg>
<div class="abs" style="left:352px;top:785px;width:1px;height:36px;background:#000"></div>
<svg class="abs" style="left:230px;top:994px" width="240" height="18" viewBox="0 0 240 18"><g fill="none" stroke="#000" stroke-width="1"><path d="M2.5 2.5C3.5 9 3.5 13.5 8 13.5H52C56 13.5 56.5 9 59 2.5"/><path d="M59.5 2.5C61 9 61.5 15.5 65.5 15.5H123C127 15.5 128 9 131 1.5" /><path d="M130 2.5C131 9 131.5 13.5 135.5 13.5H170C174 13.5 174.5 9 177 2.5"/><path d="M178 2.5C179 9 179.5 13.5 183.5 13.5H228C232 13.5 232.5 9 235 2.5"/></g></svg>
<div class="s" style="left:242px;top:995px">Python</div>
<div class="s" style="left:300px;top:996px">Command</div>
<div class="s" style="left:371px;top:995px">Error</div>
<div class="s" style="left:419px;top:995px">History</div>
<div class="t" style="left:2px;top:1020px;letter-spacing:0.11px">Working Directory: C:/Users/Owner/Documents/Coreform/GitLab/techdocs/dynaintegration/tutorials/simple_bracket</div>
<div class="abs" style="left:624px;top:1015px;width:1px;height:22px;background:#d7d7d7"></div>
<div class="abs" style="left:1274px;top:1016px;width:588px;height:21px;background:#e6e6e6;border:1px solid #bcbcbc"></div>
<div class="btn" style="left:1897px;top:1016px;width:21px;height:20px;border-color:#bdbdbd"><svg width="19" height="18" viewBox="0 0 19 18" style="display:block;"><circle cx="9.5" cy="9" r="7.8" fill="#e01020" stroke="#7a0008" stroke-width="1"/><ellipse cx="9.5" cy="5.5" rx="5" ry="2.8" fill="#ff8088" opacity="0.6"/><path d="M7 6.5l5 5M12 6.5l-5 5" stroke="#fff" stroke-width="1.9"/></svg></div>
<div class="dt" style="left:1650px;top:77px;width:270px;height:19px"></div>
<div class="t" style="left:1655px;top:81px;">Command Panel</div>
<svg class="abs" style="left:1882px;top:81px" width="10" height="10" viewBox="0 0 10 10"><g fill="none" stroke="#333" stroke-width="1" shape-rendering="crispEdges"><path d="M1.5 4.5h5v4h-5z"/><path d="M3.5 4v-2.5h5v4.5h-2"/><path d="M1.5 5h5M3.5 2h5" stroke-width="1"/></g></svg>
<svg class="abs" style="left:1903px;top:82px" width="9" height="9" viewBox="0 0 9 9"><path d="M1 1l7 7M8 1l-7 7" stroke="#222" stroke-width="1.7" fill="none"/></svg>
<div class="gb" style="left:1661px;top:109px;width:248px;height:57px"></div>
<div class="gbl" style="left:1668px;top:102px">Mode - Mesh</div>
<div class="gb" style="left:1661px;top:174px;width:248px;height:137px"></div>
<div class="gbl" style="left:1668px;top:167px">Entity - Curve</div>
<div class="gb" style="left:1661px;top:319px;width:248px;height:97px"></div>
<div class="gbl" style="left:1668px;top:312px">Action - Refine</div>
<div class="btn" style="left:1668px;top:123px;width:38px;height:38px;border-color:#c4c4c4;"><div style="position:absolute;left:-1px;top:-1px"><svg width="38" height="38" viewBox="0 0 38 38" style="display:block;"><path d="M7.6 8v17h14.9V8" fill="url(#gBlD)" stroke="#0a1f4a" stroke-width="0.7"/><ellipse cx="15" cy="8" rx="7.4" ry="2.6" fill="#1c4a80" stroke="#0a1f4a" stroke-width="0.7"/><path d="M25.5 14.3L34.9 29.3H17z" fill="#1a4a85" stroke="#0a1f4a" stroke-width="0.7"/><circle cx="11.2" cy="26.7" r="7.2" fill="url(#rBl)" stroke="#0a1f4a" stroke-width="0.6"/></svg></div></div>
<div class="btn on" style="left:1708px;top:123px;width:38px;height:38px;"><div style="position:absolute;left:-1px;top:-1px"><svg width="38" height="38" viewBox="0 0 38 38" style="display:block;"><g stroke="#0a0a0a" stroke-width="1.2" stroke-linejoin="round"><path d="M4.2 11.1L22.8 16.3L23.2 34.5L7.2 28.9Z" fill="#c3a8e6"/><path d="M4.2 11.1L17.6 4.2L35.2 7.2L22.8 16.3Z" fill="#7a58a8"/><path d="M22.8 16.3L35.2 7.2L34.1 25.4L23.2 34.5Z" fill="#66468f"/></g><path d="M10.4 12.8L12.5 30.8M5.2 17.0L22.9 22.4M16.6 14.6L17.9 32.6M6.2 23.0L23.1 28.4M8.7 8.8L26.9 13.3M10.4 12.8L23.5 5.2M13.1 6.5L31.1 10.2M16.6 14.6L29.3 6.2M26.9 13.3L26.8 31.5M22.9 22.4L34.8 13.3M31.1 10.2L30.5 28.4M23.1 28.4L34.5 19.3" stroke="#0a0a0a" stroke-width="1.05" fill="none"/></svg></div></div>
<div class="btn" style="left:1747px;top:123px;width:38px;height:38px;border-color:#c4c4c4;"><div style="position:absolute;left:-1px;top:-1px"><svg width="38" height="38" viewBox="0 0 38 38" style="display:block;"><g stroke="#0a0a0a" stroke-width="1.2" stroke-linejoin="round"><path d="M3.6 11.1L22.2 16.3L22.6 34.5L6.6 28.9Z" fill="#f7b727"/><path d="M3.6 11.1L17.0 4.2L34.6 7.2L22.2 16.3Z" fill="#e9a010"/><path d="M22.2 16.3L34.6 7.2L33.5 25.4L22.6 34.5Z" fill="#b87a08"/></g><path d="M9.8 12.8L11.9 30.8M4.6 17.0L22.3 22.4M16.0 14.6L17.3 32.6M5.6 23.0L22.5 28.4M8.1 8.8L26.3 13.3M9.8 12.8L22.9 5.2M12.5 6.5L30.5 10.2M16.0 14.6L28.7 6.2M26.3 13.3L26.2 31.5M22.3 22.4L34.2 13.3M30.5 10.2L29.9 28.4M22.5 28.4L33.9 19.3" stroke="#0a0a0a" stroke-width="1.05" fill="none"/></svg></div></div>
<div class="btn" style="left:1786px;top:123px;width:38px;height:38px;border-color:#c4c4c4;"><div style="position:absolute;left:-1px;top:-1px"><svg width="38" height="38" viewBox="0 0 38 38" style="display:block;"><path d="M9.4 14.2l19.6 0.3-0.2 5.2-19.4-1.3z" fill="#ecd2b4" stroke="#c9a77f" stroke-width="0.5"/><path d="M9.4 16.4c7 0.4 13.5 1.9 19 4.6l-1.3 5c-5.5-3-11.5-4.3-17.7-4.5z" fill="url(#gOr)" stroke="#9a6020" stroke-width="0.8"/></svg></div></div>
<div class="btn" style="left:1826px;top:123px;width:38px;height:38px;border-color:#c4c4c4;"><div style="position:absolute;left:-1px;top:-1px"><svg width="38" height="38" viewBox="0 0 38 38" style="display:block;"><rect x="9.1" y="11" width="19.8" height="15.7" fill="#f2a040"/><rect x="9.1" y="11" width="19.8" height="4" fill="#f8c070"/><path d="M9.1 16.2h19.8M9.1 21.5h19.8M19 11v5.2M14 16.2v5.3M24 16.2v5.3M19 21.5v5.2" stroke="#fbe2b8" stroke-width="1.1"/><rect x="9.1" y="11" width="19.8" height="15.7" fill="none" stroke="#c98530" stroke-width="0.8"/></svg></div></div>
<div class="btn" style="left:1865px;top:123px;width:38px;height:38px;border-color:#c4c4c4;"><div style="position:absolute;left:-1px;top:-1px"><svg width="38" height="38" viewBox="0 0 38 38" style="display:block;"><rect x="8" y="8" width="25.4" height="25" rx="1.5" fill="#000"/><rect x="5.2" y="5.2" width="25.4" height="24.8" fill="url(#rRb2)" stroke="#000" stroke-width="0.8"/></svg></div></div>
<div class="btn" style="left:1668px;top:188px;width:38px;height:38px;border-color:#c4c4c4;"><div style="position:absolute;left:-1px;top:-1px"><svg width="38" height="38" viewBox="0 0 38 38" style="display:block;"><g stroke="#0a0a0a" stroke-width="1.2" stroke-linejoin="round"><path d="M3.6 11.1L22.2 16.3L22.6 34.5L6.6 28.9Z" fill="#d07af0"/><path d="M3.6 11.1L17.0 4.2L34.6 7.2L22.2 16.3Z" fill="#c030f0"/><path d="M22.2 16.3L34.6 7.2L33.5 25.4L22.6 34.5Z" fill="#7a2aa8"/></g><path d="M9.8 12.8L11.9 30.8M4.6 17.0L22.3 22.4M16.0 14.6L17.3 32.6M5.6 23.0L22.5 28.4M8.1 8.8L26.3 13.3M9.8 12.8L22.9 5.2M12.5 6.5L30.5 10.2M16.0 14.6L28.7 6.2M26.3 13.3L26.2 31.5M22.3 22.4L34.2 13.3M30.5 10.2L29.9 28.4M22.5 28.4L33.9 19.3" stroke="#0a0a0a" stroke-width="1.05" fill="none"/></svg></div></div>
<div class="btn" style="left:1708px;top:188px;width:38px;height:38px;border-color:#c4c4c4;"><div style="position:absolute;left:-1px;top:-1px"><svg width="38" height="38" viewBox="0 0 38 38" style="display:block;"><path d="M3.9 17.6c5-1 10-5 15.6-6.5 5.5 1.5 9 5 14.4 7.2-5 3-9 6.5-14.2 9-5-2.7-10.3-6.5-15.8-9.7z" fill="#b79ad8" stroke="#3a1a58" stroke-width="0.8"/><path d="M8.5 16c5 3 10 6.5 15 9.5M13.5 13.5c5 2.5 10 6 15.3 8.8M9 20.8c5.5-2 10.5-5 15.3-8M14 24c5.5-2.5 10.5-5.5 15.5-8.5" stroke="#3a1a58" stroke-width="0.7" fill="none"/></svg></div></div>
<div class="btn on" style="left:1747px;top:188px;width:38px;height:38px;"><div style="position:absolute;left:-1px;top:-1px"><svg width="38" height="38" viewBox="0 0 38 38" style="display:block;"><path d="M12.1 28.3C13.5 20.5 18.5 14.5 28.4 12" fill="none" stroke="#6a3a98" stroke-width="1.4"/><circle cx="12.1" cy="28.3" r="1.8" fill="#1a1020"/><circle cx="28.4" cy="12" r="1.8" fill="#1a1020"/><circle cx="17.6" cy="16.9" r="1.8" fill="#1a1020"/></svg></div></div>
<div class="btn" style="left:1786px;top:188px;width:38px;height:38px;border-color:#c4c4c4;"><div style="position:absolute;left:-1px;top:-1px"><svg width="38" height="38" viewBox="0 0 38 38" style="display:block;"><path d="M18.9 8.5v20.1M8.7 13L29.6 23.7M8.7 23.7L29.6 13" stroke="#7a7a7a" stroke-width="1.1"/><path d="M18.9 15.8l2.2 2.4-2.2 2.4-2.2-2.4z" fill="#e6dcff" stroke="#5a2a90" stroke-width="0.9"/></svg></div></div>
<div class="btn" style="left:1826px;top:188px;width:38px;height:38px;border-color:#c4c4c4;"><div style="position:absolute;left:-1px;top:-1px"><svg width="38" height="38" viewBox="0 0 38 38" style="display:block;"><circle cx="18.9" cy="10.3" r="3.8" fill="#e6e6e0" stroke="#b8b8b0" stroke-width="0.5"/><circle cx="11.5" cy="14" r="3.6" fill="url(#rPu)"/><circle cx="26.3" cy="14" r="3.6" fill="url(#rPu)"/><path d="M4.3999999999999995 23.5c0-5.4 2.3400000000000003-6 5.2-6s5.2 0.6000000000000001 5.2 6z" fill="url(#rPu)"/><path d="M23.0 23.5c0-5.4 2.3400000000000003-6 5.2-6s5.2 0.6000000000000001 5.2 6z" fill="url(#rPu)"/><circle cx="18.9" cy="18.2" r="3.9" fill="url(#rPu)"/><path d="M12.899999999999999 30.0c0-6.84 2.7-7.6 6-7.6s6 0.76 6 7.6z" fill="url(#rPu)"/></svg></div></div>
<div class="btn" style="left:1865px;top:188px;width:38px;height:38px;border-color:#c4c4c4;"><div style="position:absolute;left:-1px;top:-1px"><svg width="38" height="38" viewBox="0 0 38 38" style="display:block;"><g fill="#cbb6e6" stroke="#2a2038" stroke-width="1.1"><rect x="5.5" y="4.5" width="3.6" height="28.5"/><rect x="9.1" y="4.5" width="3.6" height="28.5"/><rect x="5.5" y="25.5" width="26.5" height="3.7"/><rect x="5.5" y="29.2" width="26.5" height="3.7"/></g><path d="M23.2 4.5v21M12.7 12.7h19.3M12.7 4.5v28.5" stroke="#2a2038" stroke-width="1.1" fill="none"/></svg></div></div>
<div class="btn" style="left:1668px;top:228px;width:38px;height:38px;border-color:#c4c4c4;"><div style="position:absolute;left:-1px;top:-1px"><svg width="38" height="38" viewBox="0 0 38 38" style="display:block;"><path d="M14.3 15l6-2.9 5.2 2.9 0.9 6.5-6.1 3.6-6.9-3.6z" fill="none" stroke="#7a22c8" stroke-width="1"/><path d="M14.3 15l6 3.2 5.2-3.2M20.3 18.2v6.9" stroke="#7a22c8" stroke-width="0.9" fill="none"/><circle cx="20.3" cy="12.1" r="1.4" fill="#fff" stroke="#7a22c8" stroke-width="1"/><circle cx="25.5" cy="15" r="1.4" fill="#fff" stroke="#7a22c8" stroke-width="1"/><circle cx="26.4" cy="21.5" r="1.4" fill="#fff" stroke="#7a22c8" stroke-width="1"/><circle cx="20.3" cy="25.1" r="1.4" fill="#fff" stroke="#7a22c8" stroke-width="1"/><circle cx="13.4" cy="21.5" r="1.4" fill="#fff" stroke="#7a22c8" stroke-width="1"/><circle cx="14.3" cy="15" r="1.4" fill="#fff" stroke="#7a22c8" stroke-width="1"/></svg></div></div>
<div class="btn" style="left:1708px;top:228px;width:38px;height:38px;border-color:#c4c4c4;"><div style="position:absolute;left:-1px;top:-1px"><svg width="38" height="38" viewBox="0 0 38 38" style="display:block;"><path d="M18.9 9.5L9.5 23.8l9.4 4.2z" fill="url(#gPu)" stroke="#3a1a68" stroke-width="0.7"/><path d="M18.9 9.5L28 23.8l-9.1 4.2z" fill="#4a2a78" stroke="#3a1a68" stroke-width="0.7"/><circle cx="18.9" cy="9.5" r="1.5" fill="#fff" stroke="#7a22c8" stroke-width="1"/><circle cx="9.5" cy="23.8" r="1.5" fill="#fff" stroke="#7a22c8" stroke-width="1"/><circle cx="28" cy="23.8" r="1.5" fill="#fff" stroke="#7a22c8" stroke-width="1"/><circle cx="18.9" cy="28" r="1.5" fill="#fff" stroke="#7a22c8" stroke-width="1"/></svg></div></div>
<div class="btn" style="left:1747px;top:228px;width:38px;height:38px;border-color:#c4c4c4;"><div style="position:absolute;left:-1px;top:-1px"><svg width="38" height="38" viewBox="0 0 38 38" style="display:block;"><rect x="13" y="14.1" width="12.4" height="10.6" fill="#ead8ff" stroke="#7a22c8" stroke-width="1.5"/><circle cx="13" cy="14.1" r="1.3" fill="#fff" stroke="#7a22c8" stroke-width="1"/><circle cx="25.4" cy="14.1" r="1.3" fill="#fff" stroke="#7a22c8" stroke-width="1"/><circle cx="13" cy="24.7" r="1.3" fill="#fff" stroke="#7a22c8" stroke-width="1"/><circle cx="25.4" cy="24.7" r="1.3" fill="#fff" stroke="#7a22c8" stroke-width="1"/></svg></div></div>
<div class="btn" style="left:1786px;top:228px;width:38px;height:38px;border-color:#c4c4c4;"><div style="position:absolute;left:-1px;top:-1px"><svg width="38" height="38" viewBox="0 0 38 38" style="display:block;"><path d="M18.9 10.4L10.7 27h16.5z" fill="url(#gPu)" stroke="#7a22c8" stroke-width="1.5" stroke-linejoin="round"/><circle cx="18.9" cy="10.4" r="1.5" fill="#fff" stroke="#7a22c8" stroke-width="1"/><circle cx="10.7" cy="27" r="1.5" fill="#fff" stroke="#7a22c8" stroke-width="1"/><circle cx="27.2" cy="27" r="1.5" fill="#fff" stroke="#7a22c8" stroke-width="1"/></svg></div></div>
<div class="btn" style="left:1826px;top:228px;width:38px;height:38px;border-color:#c4c4c4;"><div style="position:absolute;left:-1px;top:-1px"><svg width="38" height="38" viewBox="0 0 38 38" style="display:block;"><path d="M10 18.9h18" stroke="#7a22c8" stroke-width="1.5"/><circle cx="9.8" cy="18.9" r="1.5" fill="#fff" stroke="#7a22c8" stroke-width="1"/><circle cx="28" cy="18.9" r="1.5" fill="#fff" stroke="#7a22c8" stroke-width="1"/></svg></div></div>
<div class="btn" style="left:1865px;top:228px;width:38px;height:38px;border-color:#c4c4c4;"><div style="position:absolute;left:-1px;top:-1px"><svg width="38" height="38" viewBox="0 0 38 38" style="display:block;"><path d="M18.9 9.8v17.9M9.8 18.9h18.2" stroke="#7a22c8" stroke-width="1.6"/><circle cx="18.9" cy="18.9" r="1.2" fill="#fff" stroke="#7a22c8" stroke-width="0.6"/></svg></div></div>
<div class="btn" style="left:1668px;top:268px;width:38px;height:38px;border-color:#c4c4c4;"><div style="position:absolute;left:-1px;top:-1px"><svg width="38" height="38" viewBox="0 0 38 38" style="display:block;"><rect x="7.8" y="7.8" width="22.1" height="21.8" fill="#fff"/><path d="M12.5 19.5c2-1 3.5-3.5 6.4-5 3 1.5 4.5 4 6.5 5-1 2.5-1.5 5-3 6.5-1.5-1-2.5-1.5-3.5-1.5s-2 0.5-3.5 1.5c-1.5-1.5-2-4-2.9-6.5z" fill="#d2a8f0" stroke="#7a4ab0" stroke-width="0.8"/><path d="M18.9 22V9.5M18.9 22L8.3 29M18.9 22l10.6 7" stroke="#f01020" stroke-width="1.2" fill="none"/><path d="M17 11.5l1.9-2.8 1.9 2.8zM8 26v3.3h3.3zM29.8 26v3.3h-3.3z" fill="#f01020"/><text x="8" y="15.3" font-family="Liberation Sans" font-size="8.5" font-weight="bold" fill="#000">Σ</text></svg></div></div>
<div class="btn" style="left:1708px;top:268px;width:38px;height:38px;border-color:#c4c4c4;"><div style="position:absolute;left:-1px;top:-1px"><svg width="38" height="38" viewBox="0 0 38 38" style="display:block;"><rect x="8.9" y="11.1" width="19.7" height="16.5" fill="#c9b0e6"/><rect x="13.8" y="11.1" width="4.9" height="16.5" fill="#8a3ac8"/><path d="M8.9 15.2h19.7M8.9 19.3h19.7M8.9 23.4h19.7M13.8 11.1v16.5M18.7 11.1v16.5M23.7 11.1v16.5" stroke="#efe6fa" stroke-width="0.9"/><rect x="8.9" y="11.1" width="19.7" height="16.5" fill="none" stroke="#8a6ab0" stroke-width="0.7"/></svg></div></div>
<div class="btn" style="left:1668px;top:333px;width:38px;height:38px;border-color:#c4c4c4;"><div style="position:absolute;left:-1px;top:-1px"><svg width="38" height="38" viewBox="0 0 38 38" style="display:block;"><rect x="8.9" y="8.7" width="6.7" height="6.7" fill="url(#gPd)" stroke="#2a0a3a" stroke-width="0.7"/><rect x="8.9" y="15.399999999999999" width="6.7" height="6.7" fill="url(#gPd)" stroke="#2a0a3a" stroke-width="0.7"/><rect x="8.9" y="22.1" width="6.7" height="6.7" fill="url(#gPd)" stroke="#2a0a3a" stroke-width="0.7"/><rect x="15.600000000000001" y="15.399999999999999" width="6.7" height="6.7" fill="url(#gPd)" stroke="#2a0a3a" stroke-width="0.7"/><rect x="15.600000000000001" y="22.1" width="6.7" height="6.7" fill="url(#gPd)" stroke="#2a0a3a" stroke-width="0.7"/><rect x="22.3" y="22.1" width="6.7" height="6.7" fill="url(#gPd)" stroke="#2a0a3a" stroke-width="0.7"/><path d="M22.3 9.2h1.2M28.3 9.2h1.2M28.3 15.6h1.2" stroke="#111" stroke-width="1.2"/></svg></div></div>
<div class="btn" style="left:1708px;top:333px;width:38px;height:38px;border-color:#c4c4c4;"><div style="position:absolute;left:-1px;top:-1px"><svg width="38" height="38" viewBox="0 0 38 38" style="display:block;"><circle cx="18.9" cy="15" r="6.2" fill="url(#rPu)" stroke="#7a2ab0" stroke-width="0.8" stroke-dasharray="1.5 0.7"/><circle cx="18.9" cy="15" r="3.6" fill="#d9a8f5" stroke="#8a3ac0" stroke-width="0.6"/><path d="M16 20.5l-1.8 8.5 3.2-2 1.5 2zM21.8 20.5l1.8 8.5-3.2-2-1.5 2z" fill="#a048d8" stroke="#6a1a9a" stroke-width="0.5"/></svg></div></div>
<div class="btn" style="left:1747px;top:333px;width:38px;height:38px;border-color:#c4c4c4;"><div style="position:absolute;left:-1px;top:-1px"><svg width="38" height="38" viewBox="0 0 38 38" style="display:block;"><path d="M8.5 26c1-5 3-10 6.5-13.5 5-1.8 10-1.5 13 0 1 2.5 1.3 5 1.3 7.5z" fill="url(#rPu)" stroke="#5a1a8a" stroke-width="0.7"/><path d="M8.5 26l20.8-6 0 1.8L9 27.8z" fill="#a8d8c8" stroke="#6aa08a" stroke-width="0.5"/><path d="M14.5 16.5c3.5-2 8-2.5 11.5-1.2-1 1.5-2.5 2.7-5 3.2s-5 0-6.5-2z" fill="#7a1aa8"/><path d="M16 13.5c3-1 7-1 10 0" stroke="#f0c8ff" stroke-width="1.2" fill="none"/></svg></div></div>
<div class="btn" style="left:1786px;top:333px;width:38px;height:38px;border-color:#c4c4c4;"><div style="position:absolute;left:-1px;top:-1px"><svg width="38" height="38" viewBox="0 0 38 38" style="display:block;"><g stroke="#1a0a2a" stroke-width="1.1" stroke-linejoin="round"><path d="M15.9 9.4h7.6l4.1 4.1v9.5H15.9z" fill="url(#gPd)"/><path d="M23.5 9.4v4.1h4.1" fill="#d9a8f5"/><path d="M10 13.9h8l4.4 4.4v10H10z" fill="url(#gPd)"/><path d="M18 13.9v4.4h4.4" fill="#d9a8f5"/></g></svg></div></div>
<div class="btn" style="left:1826px;top:333px;width:38px;height:38px;border-color:#c4c4c4;"><div style="position:absolute;left:-1px;top:-1px"><svg width="38" height="38" viewBox="0 0 38 38" style="display:block;"><path d="M11 13l3.3-3 5 5.5 6-5.7 3.3 3.4-5.8 5.7 5.5 6.5-3.4 3.2-5.7-6.3-5.6 6.3-3.6-3.2 5.7-6.2z" fill="url(#gPd)" stroke="#2a0a3a" stroke-width="1.1" stroke-linejoin="round"/></svg></div></div>
<div class="btn on" style="left:1865px;top:333px;width:38px;height:38px;"><div style="position:absolute;left:-1px;top:-1px"><svg width="38" height="38" viewBox="0 0 38 38" style="display:block;"><rect x="10.2" y="10" width="19.5" height="19.6" fill="url(#gPd2)"/><path d="M10.2 19.8h19.5M19.95 10v19.6" stroke="#2a0a4a" stroke-width="1.3"/><rect x="10.2" y="10" width="19.5" height="19.6" fill="none" stroke="#4a1a6a" stroke-width="0.7"/><path d="M10.9 23.3h6.2v-3" stroke="#eadcf8" stroke-width="1.3" fill="none"/><rect x="16.5" y="23.8" width="3" height="5.5" fill="#e8e0f4"/><circle cx="18.1" cy="21.9" r="0.9" fill="#2a0a4a"/></svg></div></div>
<div class="btn" style="left:1668px;top:373px;width:38px;height:38px;border-color:#c4c4c4;"><div style="position:absolute;left:-1px;top:-1px"><svg width="38" height="38" viewBox="0 0 38 38" style="display:block;"><rect x="9.1" y="9.8" width="19.7" height="17.5" fill="#dcaaf0" stroke="#8a4ab0" stroke-width="0.9"/><text x="10" y="17.6" font-family="Liberation Mono" font-weight="bold" font-size="8" fill="#000">1</text><path d="M16 14.8h5.5M19.5 12.6l2.3 2.2-2.3 2.2" stroke="#000" stroke-width="1.2" fill="none"/><text x="11" y="25.5" font-family="Liberation Mono" font-weight="bold" font-size="8.5" fill="#000" letter-spacing="-0.3">100</text></svg></div></div>
<div class="abs" style="left:1664px;top:427px;width:242px;height:22px;background:#e1e1e1;border:1px solid #adadad"></div>
<svg class="abs" style="left:1670px;top:431px" width="14" height="14" viewBox="0 0 14 14"><rect x="0" y="0" width="6.5" height="6.5" fill="#b040e0"/><rect x="7.5" y="0" width="6.5" height="6.5" fill="#c040e8"/><rect x="7.5" y="7.5" width="6.5" height="6.5" fill="#a030d0"/><rect x="0" y="7.5" width="6.5" height="6.5" fill="#9a30c8"/><path d="M0 7h14M7 0v14" stroke="#2a0a4a" stroke-width="1"/><rect x="0.5" y="10" width="3" height="3.5" fill="#fff" stroke="#2a0a4a" stroke-width="0.5"/></svg>
<div class="s" style="left:1687px;top:431px">General Refinement</div>
<svg class="abs" style="left:1891px;top:436px" width="10" height="6" viewBox="0 0 10 6"><path d="M1 1l4 4 4-4" stroke="#333" stroke-width="1.1" fill="none"/></svg>
<div class="abs" style="left:1655px;top:455px;width:260px;height:320px;overflow:hidden">
<div class="gb" style="left:5px;top:15px;width:270px;height:74px"></div>
<div class="abs" style="left:11px;top:7px;width:187px;height:16px;background:#f0f0f0"></div>
<div class="cb" style="left:13px;top:8px"></div>
<div class="s" style="left:29px;top:8px">Find Curves Using Angle Threshold</div>
<div class="s" style="left:14px;top:35px;color:#838383">Exterior Angle</div>
<div class="fld dis" style="left:96px;top:32px;width:155px;height:19px"></div>
<div class="s" style="left:100px;top:35px;color:#838383;">135</div>
<div class="abs" style="left:177px;top:59px;width:73px;height:20px;background:#cccccc;border:1px solid #bfbfbf"></div>
<div class="s" style="left:184px;top:62px;color:#838383">Find Curves</div>
<div class="s" style="left:4px;top:100px">Curve ID(s)</div>
<div class="fld" style="left:70px;top:97px;width:200px;height:19px;background:#d9a3f9"></div>
<div class="s" style="left:73px;top:100px;">61 60</div>
<div class="gb" style="left:5px;top:129px;width:270px;height:62px"></div>
<div class="gbl" style="left:11px;top:122px">Refinement Condition</div>
<div class="rd on" style="left:11px;top:144.5px"></div>
<div class="s" style="left:29px;top:144px">Split Iterations</div>
<div class="fld" style="left:109px;top:141.5px;width:146px;height:19px"></div>
<div class="s" style="left:113px;top:145px;">1</div>
<div class="rd" style="left:11px;top:169.5px"></div>
<div class="s" style="left:29px;top:169px">Target Size</div>
<div class="fld dis" style="left:109px;top:166.5px;width:146px;height:19px"></div>
<div class="s" style="left:113px;top:170px;color:#838383;">1</div>
<div class="s" style="left:4px;top:202px">Bias</div>
<div class="fld" style="left:70px;top:198.5px;width:200px;height:19px"></div>
<div class="s" style="left:73px;top:202px;">1.&#48;</div>
<div class="gb" style="left:5px;top:231px;width:270px;height:62px"></div>
<div class="gbl" style="left:11px;top:224px">Refinement Boundary</div>
<div class="rd on" style="left:11px;top:246.5px"></div>
<div class="s" style="left:29px;top:246px">Element Depth</div>
<div class="fld" style="left:129px;top:244px;width:126px;height:19px"></div>
<div class="s" style="left:133px;top:247px;">1</div>
<div class="rd" style="left:11px;top:271.5px"></div>
<div class="s" style="left:29px;top:271px">Refinement Radius</div>
<div class="fld dis" style="left:129px;top:269px;width:126px;height:19px"></div>
<div class="s" style="left:133px;top:272px;color:#838383;">1</div>
<div class="cb" style="left:5px;top:302px"></div>
<div class="s" style="left:22px;top:302px">Smooth</div>
</div>
<div class="btn" style="left:1661px;top:779px;width:28px;height:28px;border-color:#adadad"><svg width="26" height="26" viewBox="0 0 26 26"><circle cx="13" cy="13" r="10" fill="none" stroke="#111" stroke-width="1.5"/><text x="10.2" y="19.5" font-family="Liberation Serif" font-size="17" fill="#111">i</text></svg></div>
<svg class="abs" style="left:1699px;top:781px" width="24" height="24" viewBox="0 0 24 24"><path d="M6.5 9.5A7.2 7.2 0 1 1 13 19.5" fill="none" stroke="#1a3fa8" stroke-width="2.3"/><path d="M1.5 10.5l7.5-4 0.5 7.5z" fill="#1a3fa8"/></svg>
<div class="abs" style="left:1842px;top:782px;width:73px;height:21px;background:#e1e1e1;border:2px solid #0078d7"></div>
<div class="s" style="left:1865px;top:786px">Apply</div>
<div class="abs" style="left:1655px;top:969px;width:260px;height:1px;background:#fff"></div>
<div class="abs" style="left:1672px;top:970px;width:217px;height:15px;background:#cdcdcd"></div>
<svg class="abs" style="left:1660px;top:973px" width="6" height="9" viewBox="0 0 6 9"><path d="M5 0.5l-4 4 4 4" stroke="#555" stroke-width="1.5" fill="none"/></svg>
<svg class="abs" style="left:1904px;top:973px" width="6" height="9" viewBox="0 0 6 9"><path d="M1 0.5l4 4-4 4" stroke="#555" stroke-width="1.5" fill="none"/></svg>
<div class="abs" style="left:1650px;top:991px;width:270px;height:1px;background:#d9d9d9"></div>
<div class="abs" style="left:1651px;top:991px;width:100px;height:21px;background:#fff;border:1px solid #d9d9d9;border-top:none"></div>
<div class="abs" style="left:1751px;top:992px;width:82px;height:18px;border-right:1px solid #d9d9d9;border-bottom:1px solid #d9d9d9"></div>
<div class="abs" style="left:1833px;top:992px;width:45px;height:18px;border-bottom:1px solid #d9d9d9"></div>
<div class="s" style="left:1661px;top:995px">Command Panel</div><div class="s" style="left:1761px;top:994px">Power Tools</div><div class="s" style="left:1843px;top:994px">ITEM</div>
</body></html>
